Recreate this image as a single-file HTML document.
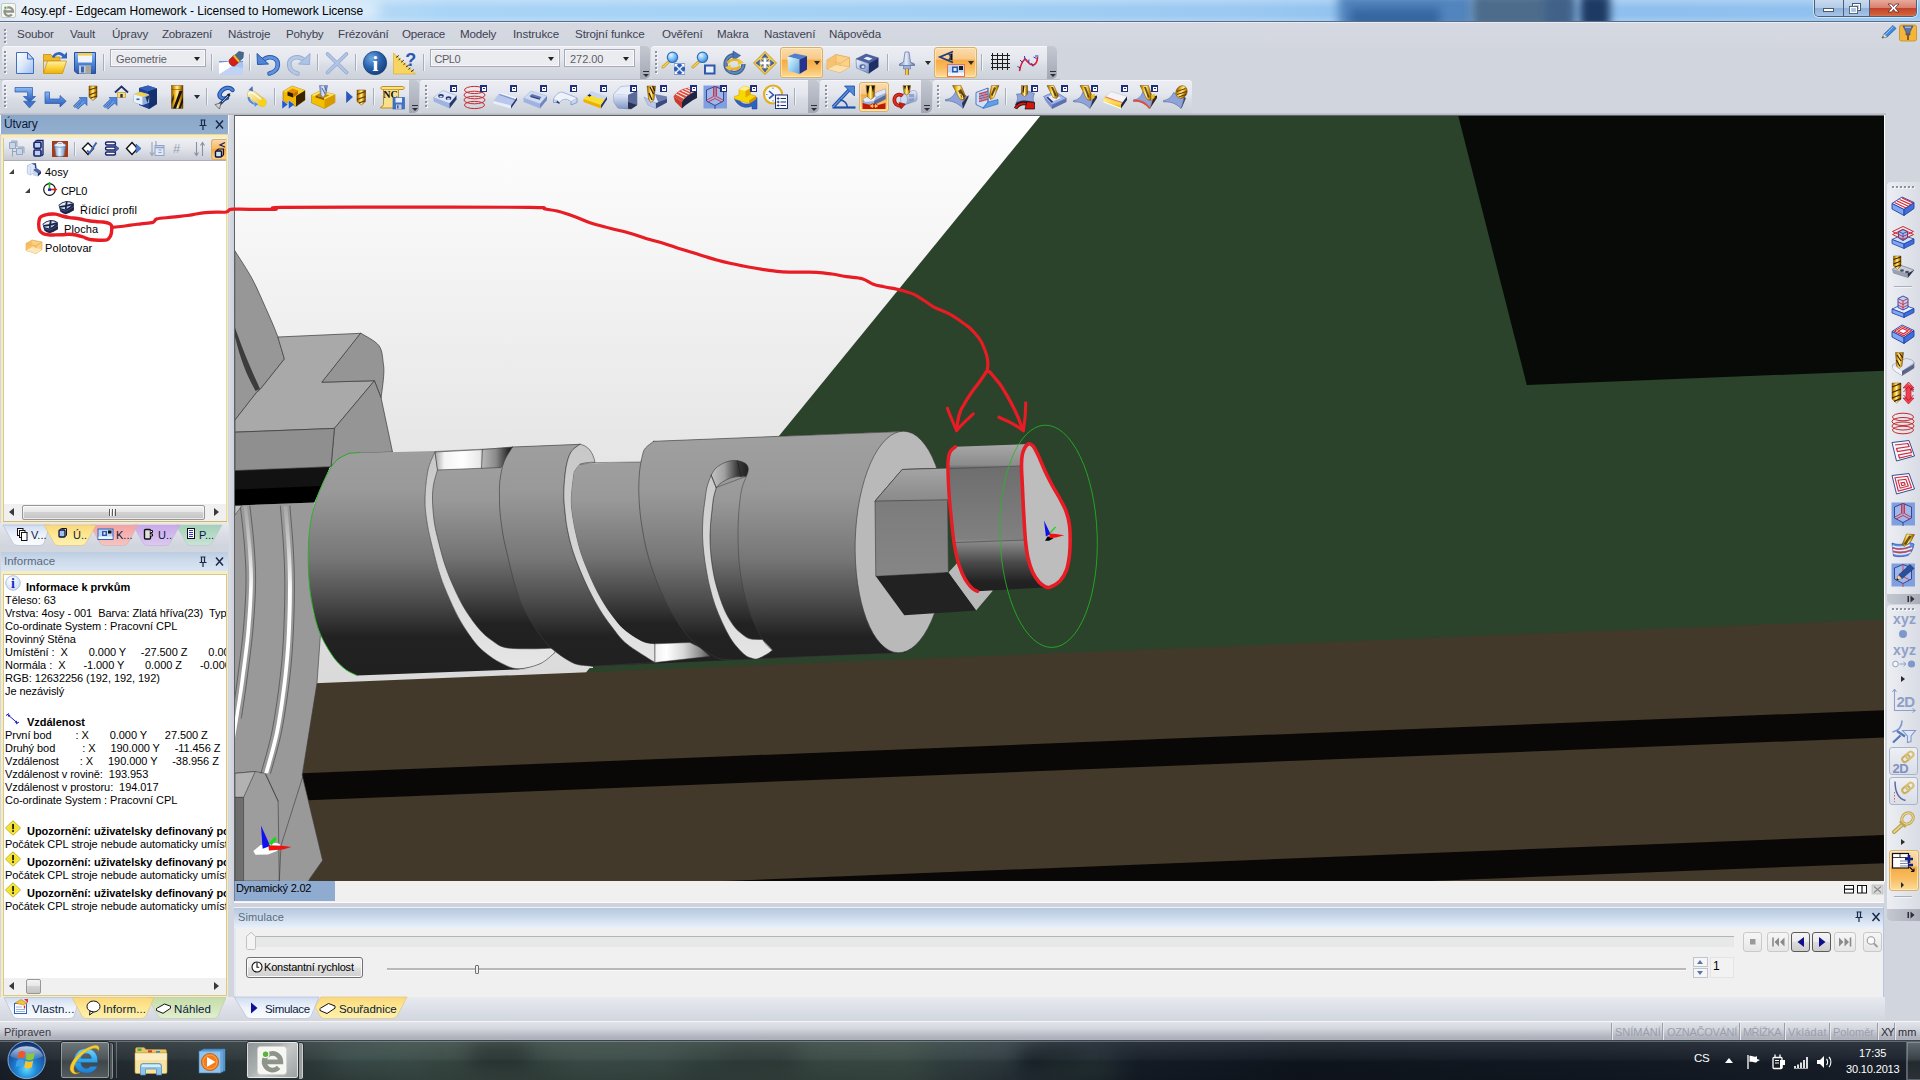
<!DOCTYPE html>
<html lang="cs"><head><meta charset="utf-8"><title>4osy.epf - Edgecam Homework</title>
<style>
html,body{margin:0;padding:0;width:1920px;height:1080px;overflow:hidden;background:#d1d5dd;}
body{font-family:"Liberation Sans",sans-serif;font-size:12px;color:#000;}
#root{position:relative;width:1920px;height:1080px;overflow:hidden;background:#d1d5dd;}
.a{position:absolute;}
.t{position:absolute;white-space:pre;line-height:1;}
svg{position:absolute;overflow:visible;}
</style></head><body><div id="root">
<!-- ===== TITLE BAR ===== -->
<div class="a" id="titlebar" style="left:0;top:0;width:1920px;height:22px;overflow:hidden;background:linear-gradient(90deg,#d9e6f4 0px,#cfe2f5 250px,#b6d9f6 370px,#a9d4f6 450px,#a6d2f5 700px,#a1cef3 1000px,#9ac8f1 1250px,#92c3ef 1340px,#8ebfee 1650px,#92c3ef 1920px);">
  <div class="a" style="left:0;top:0;width:1920px;height:22px;background:linear-gradient(180deg,rgba(255,255,255,.25) 0,rgba(255,255,255,0) 8px,rgba(255,255,255,0) 15px,rgba(255,255,255,.18) 21px);"></div>
  <!-- blurred wallpaper blobs behind glass -->
  <div class="a" style="left:1338px;top:-6px;width:135px;height:34px;background:#4f82bb;filter:blur(5px);opacity:.95"></div>
  <div class="a" style="left:1350px;top:8px;width:90px;height:20px;background:#2f5f9a;filter:blur(5px);opacity:.8"></div>
  <div class="a" style="left:1472px;top:-6px;width:100px;height:34px;background:#4d6c8c;filter:blur(4px);"></div>
  <div class="a" style="left:1580px;top:-6px;width:30px;height:34px;background:#1d3a63;filter:blur(4px);"></div>
  <div class="a" style="left:1545px;top:-6px;width:30px;height:34px;background:#3e5f88;filter:blur(4px);opacity:.8"></div>
  <!-- text glow -->
  <div class="a" style="left:10px;top:2px;width:370px;height:17px;background:rgba(255,255,255,.55);filter:blur(6px);border-radius:9px"></div>
  <!-- app icon -->
  <div class="a" style="left:1px;top:3px;width:15px;height:15px;background:#f7f7f4;border:1px solid #c4c9c4;border-radius:2px;box-sizing:border-box"></div>
  <svg style="left:1px;top:3px" width="15" height="15" viewBox="0 0 15 15"><path d="M3.400 8.500 H12 A4.300 4.300 0 1 0 10.900 11.500" fill="none" stroke="#8f9487" stroke-width="2.300"/><circle cx="4.300" cy="4.700" r="2" fill="#f7f7f4"/><circle cx="4.400" cy="4.800" r="1.250" fill="#59b536"/></svg>
  <div class="t" style="left:21px;top:5px;font-size:12px;color:#000;letter-spacing:-0.03px">4osy.epf - Edgecam Homework - Licensed to Homework License</div>
  <!-- caption buttons -->
  <div class="a" style="left:1814px;top:0;width:103px;height:17px;border:1px solid #4b5f79;border-top:none;border-radius:0 0 5px 5px;box-sizing:border-box;overflow:hidden;box-shadow:0 0 0 1px rgba(255,255,255,.55)">
    <div class="a" style="left:0;top:0;width:28px;height:17px;background:linear-gradient(180deg,#c9dbef 0,#b4cce8 45%,#90b2db 50%,#a9c7e8 100%);border-right:1px solid #4b5f79"></div>
    <div class="a" style="left:29px;top:0;width:25px;height:17px;background:linear-gradient(180deg,#c9dbef 0,#b4cce8 45%,#90b2db 50%,#a9c7e8 100%);border-right:1px solid #4b5f79"></div>
    <div class="a" style="left:55px;top:0;width:48px;height:17px;background:linear-gradient(180deg,#e8a99c 0,#d9816f 45%,#c4432b 50%,#cf5e3b 85%,#e08a55 100%);"></div>
  </div>
  <svg style="left:1814px;top:0" width="103" height="17" viewBox="0 0 103 17">
    <rect x="9.5" y="8.5" width="10" height="3" fill="#fff" stroke="#4a5a70" stroke-width="1"/>
    <rect x="38.5" y="3.5" width="8" height="7" fill="none" stroke="#4a5a70" stroke-width="1"/><rect x="39.5" y="4.5" width="6" height="5" fill="none" stroke="#fff" stroke-width="1"/>
    <rect x="35.5" y="6.5" width="8" height="7" fill="#a9c4e6" stroke="#4a5a70" stroke-width="1"/><rect x="36.5" y="7.5" width="6" height="5" fill="none" stroke="#fff" stroke-width="1.2"/>
    <path d="M74 4 L77.5 4 L79.5 6.6 L81.5 4 L85 4 L81.3 8 L85 12 L81.5 12 L79.5 9.4 L77.5 12 L74 12 L77.7 8 Z" fill="#fff" stroke="#5a2a22" stroke-width=".8"/>
  </svg>
</div>
<div class="a" style="left:0;top:21px;width:1920px;height:1px;background:#5b6d85"></div>
<div class="a" style="left:0;top:22px;width:1920px;height:1px;background:#e9ecf2"></div>
<!-- ===== MENU BAR ===== -->
<div class="a" id="menubar" style="left:0;top:23px;width:1920px;height:23px;background:linear-gradient(180deg,#d6d9e1 0,#d2d6de 100%)">
  <div class="a" style="left:5px;top:7px;width:2px;height:15px;background:repeating-linear-gradient(180deg,#f9fafc 0 2px,transparent 2px 4px)"></div>
  <div class="a" style="left:4px;top:6px;width:2px;height:15px;background:repeating-linear-gradient(180deg,#8d92a0 0 2px,transparent 2px 4px)"></div>
</div>
<div id="menu" style="position:absolute;left:0;top:28px;height:14px;font-size:11.6px;color:#3d4152;">
<span class="t" style="left:17px;letter-spacing:-0.1px">Soubor</span>
<span class="t" style="left:70px;letter-spacing:-0.1px">Vault</span>
<span class="t" style="left:112px;letter-spacing:-0.1px">Úpravy</span>
<span class="t" style="left:162px;letter-spacing:-0.25px">Zobrazení</span>
<span class="t" style="left:228px;letter-spacing:-0.1px">Nástroje</span>
<span class="t" style="left:286px;letter-spacing:-0.2px">Pohyby</span>
<span class="t" style="left:338px;letter-spacing:-0.1px">Frézování</span>
<span class="t" style="left:402px;letter-spacing:-0.2px">Operace</span>
<span class="t" style="left:460px;letter-spacing:-0.2px">Modely</span>
<span class="t" style="left:513px;letter-spacing:-0.1px">Instrukce</span>
<span class="t" style="left:575px;letter-spacing:-0.1px">Strojní funkce</span>
<span class="t" style="left:662px;letter-spacing:-0.1px">Ověření</span>
<span class="t" style="left:717px;letter-spacing:-0.1px">Makra</span>
<span class="t" style="left:764px;letter-spacing:-0.1px">Nastavení</span>
<span class="t" style="left:829px;letter-spacing:-0.1px">Nápověda</span>
</div>
<!-- top-right small icons -->
<svg style="left:1880px;top:24px" width="38" height="18" viewBox="0 0 38 18">
  <path d="M2 14 L4 10 L13 1.5 L16 4.5 L7 13 Z" fill="#3f8be0" stroke="#1f4f9a" stroke-width=".7"/><path d="M2 14 L4 10 L7 13 Z" fill="#f2d9a6"/><path d="M2 14 L3 12.2 L4.2 13.3Z" fill="#222"/><path d="M5.2 10.8 L13.2 2.6" stroke="#9ccaf7" stroke-width="1"/>
  <rect x="19.5" y="1" width="17" height="16" rx="2" fill="#f3b63a" stroke="#c98a1a" stroke-width=".8"/>
  <path d="M23 2 H33 L30 8 V11 H26 V8 Z" fill="#5a74a8" stroke="#2d4070" stroke-width=".6"/><rect x="27" y="9" width="2" height="7" fill="#8a5a1a"/><path d="M25 3.2 H31" stroke="#c9d6f0" stroke-width="1"/>
</svg>
<!-- ===== shared gradient defs ===== -->
<svg width="0" height="0" style="left:0;top:0"><defs>
<linearGradient id="gBlue" x1="0" y1="0" x2="0" y2="1"><stop offset="0" stop-color="#8dbaf2"/><stop offset=".5" stop-color="#4f86d8"/><stop offset="1" stop-color="#2a58ad"/></linearGradient>
<linearGradient id="gBlueH" x1="0" y1="0" x2="1" y2="0"><stop offset="0" stop-color="#8dbaf2"/><stop offset="1" stop-color="#2a58ad"/></linearGradient>
<linearGradient id="gPaper" x1="0" y1="0" x2="1" y2="1"><stop offset="0" stop-color="#ffffff"/><stop offset=".5" stop-color="#dbe7fb"/><stop offset="1" stop-color="#9dbdf0"/></linearGradient>
<linearGradient id="gGold" x1="0" y1="0" x2="1" y2="0"><stop offset="0" stop-color="#8a5a00"/><stop offset=".3" stop-color="#f2bb22"/><stop offset=".5" stop-color="#fff0a0"/><stop offset=".72" stop-color="#e0a010"/><stop offset="1" stop-color="#6a4000"/></linearGradient>
<linearGradient id="gYel" x1="0" y1="0" x2="0" y2="1"><stop offset="0" stop-color="#fff1a8"/><stop offset=".5" stop-color="#fbd447"/><stop offset="1" stop-color="#eeb100"/></linearGradient>
<linearGradient id="gSteel" x1="0" y1="0" x2="1" y2="1"><stop offset="0" stop-color="#f3f6fc"/><stop offset=".5" stop-color="#b8c7e6"/><stop offset="1" stop-color="#7088bb"/></linearGradient>
<linearGradient id="gSteelV" x1="0" y1="0" x2="0" y2="1"><stop offset="0" stop-color="#e6ecf8"/><stop offset="1" stop-color="#8198c8"/></linearGradient>
<linearGradient id="gOrange" x1="0" y1="0" x2="0" y2="1"><stop offset="0" stop-color="#fbd9a0"/><stop offset=".4" stop-color="#f9c370"/><stop offset=".45" stop-color="#f6a93c"/><stop offset="1" stop-color="#fcd98a"/></linearGradient>
<radialGradient id="gInfo" cx=".35" cy=".3" r=".8"><stop offset="0" stop-color="#6fa6e0"/><stop offset=".5" stop-color="#2a62ad"/><stop offset="1" stop-color="#113a78"/></radialGradient>
<radialGradient id="gLens" cx=".35" cy=".3" r=".8"><stop offset="0" stop-color="#e6f4ff"/><stop offset=".5" stop-color="#7fc0f5"/><stop offset="1" stop-color="#2f7fd0"/></radialGradient>
<linearGradient id="gRed" x1="0" y1="0" x2="0" y2="1"><stop offset="0" stop-color="#f0504a"/><stop offset="1" stop-color="#a01008"/></linearGradient>
<linearGradient id="gPill" x1="0" y1="0" x2="0" y2="1"><stop offset="0" stop-color="#eceef3"/><stop offset=".45" stop-color="#e3e6ec"/><stop offset=".6" stop-color="#d7dbe3"/><stop offset="1" stop-color="#cfd3dc"/></linearGradient>
</defs></svg>
<style>
.pill{position:absolute;height:33px;background:linear-gradient(180deg,#eceef3 0,#e4e7ed 42%,#d8dce4 60%,#cdd1da 100%);border-radius:4px 0 0 4px;box-shadow:inset 0 1px 0 #f5f6f9}
.chev{position:absolute;width:10px;height:33px;background:linear-gradient(180deg,#c4c8d1 0,#b4b8c3 50%,#a3a7b3 100%);border-radius:0 5px 5px 0}
.chev:after{content:"";position:absolute;left:2.5px;top:27.5px;border:3px solid transparent;border-top:3.5px solid #2e2e36;border-bottom:none}
.chev:before{content:"";position:absolute;left:2.5px;top:24.500px;width:6px;height:1.5px;background:#2e2e36}
.grip{position:absolute;width:2px;height:23px;margin:1px 0 0 1px;background:repeating-linear-gradient(180deg,#f9fafc 0 2px,transparent 2px 4px)}
.grip:after{content:"";position:absolute;left:-1px;top:-1px;width:2px;height:23px;background:repeating-linear-gradient(180deg,#8d92a0 0 2px,transparent 2px 4px)}
.sep{position:absolute;width:1px;height:17px;background:#a9aebb;box-shadow:1px 0 0 #f2f3f6}
.combo{position:absolute;height:18px;box-sizing:border-box;border:1px solid #a7abb8;background:#ebecf0;box-shadow:inset 0 0 0 1px #f9f9fb;font-size:11px;color:#5c5c66;}
.combo span{position:absolute;left:5px;top:2.500px;letter-spacing:-.05px;white-space:pre}
.combo i{position:absolute;right:5px;top:7px;border:3.5px solid transparent;border-top:4px solid #222;border-bottom:none}
.dd{position:absolute;border:3.5px solid transparent;border-top:4px solid #2a2a30;border-bottom:none}
.hot{position:absolute;box-sizing:border-box;border:1px solid #d9b06a;border-radius:3px;background:linear-gradient(180deg,#fbdcae 0,#f9c987 38%,#f5ab45 42%,#f8bc60 70%,#fcdc98 100%);box-shadow:inset 0 0 0 1px rgba(255,240,200,.6)}
.ic{position:absolute;width:24px;height:24px}
</style>
<!-- toolbar backgrounds row1 -->
<div class="a" style="left:0;top:79px;width:1060px;height:1px;background:#bbbec8"></div>
<div class="pill" style="left:2px;top:46px;width:638px"></div><div class="chev" style="left:640px;top:46px"></div>
<div class="pill" style="left:651px;top:46px;width:396px"></div><div class="chev" style="left:1047px;top:46px"></div>
<!-- row2 -->
<div class="pill" style="left:2px;top:80px;width:407px"></div><div class="chev" style="left:409px;top:80px"></div>
<div class="pill" style="left:420px;top:80px;width:388px"></div><div class="chev" style="left:808px;top:80px;width:11px"></div>
<div class="pill" style="left:820px;top:80px;width:101px"></div><div class="chev" style="left:921px;top:80px;width:11px"></div>
<div class="pill" style="left:933px;top:80px;width:259px;border-radius:4px"></div>
<!-- grippers -->
<div class="grip" style="left:4px;top:51px"></div><div class="grip" style="left:655px;top:51px"></div>
<div class="grip" style="left:4px;top:85px"></div><div class="grip" style="left:425px;top:85px"></div><div class="grip" style="left:825px;top:85px"></div><div class="grip" style="left:937px;top:85px"></div>
<!-- separators row1 -->
<div class="sep" style="left:103px;top:54px"></div><div class="sep" style="left:211px;top:54px"></div><div class="sep" style="left:249px;top:54px"></div><div class="sep" style="left:317px;top:54px"></div><div class="sep" style="left:355px;top:54px"></div><div class="sep" style="left:423px;top:54px"></div>
<div class="sep" style="left:887px;top:54px"></div><div class="sep" style="left:981px;top:54px"></div>
<!-- separators row2 -->
<div class="sep" style="left:206px;top:88px"></div><div class="sep" style="left:274px;top:88px"></div><div class="sep" style="left:373px;top:88px"></div>
<div class="sep" style="left:794px;top:88px"></div><div class="sep" style="left:1005px;top:88px"></div>
<!-- combos -->
<div class="combo" style="left:110px;top:49px;width:96px"><span>Geometrie</span><i></i></div>
<div class="combo" style="left:430px;top:49px;width:130px"><span style="letter-spacing:-.5px;left:3.500px">CPL0</span><i></i></div>
<div class="combo" style="left:564px;top:49px;width:71px"><span>272.00</span><i></i></div>
<!-- hot (checked) buttons -->
<div class="hot" style="left:780px;top:47px;width:43px;height:31px"></div>
<div class="hot" style="left:934px;top:47px;width:43px;height:31px"></div>
<div class="hot" style="left:859px;top:82px;width:30px;height:30px"></div>
<!-- dropdown arrows -->
<div class="dd" style="left:194px;top:95px"></div><div class="dd" style="left:814px;top:61px"></div><div class="dd" style="left:925px;top:61px"></div><div class="dd" style="left:968px;top:61px"></div>
<!-- ===== ROW 1 ICONS (centre y=63 => top 51) ===== -->
<!-- New -->
<svg class="ic" style="left:13px;top:51px" viewBox="0 0 24 24"><path d="M3.5 1.5 H14.5 L20.5 8 V22.5 H3.5 Z" fill="url(#gPaper)" stroke="#3f6fc4" stroke-width="1"/><path d="M14.5 1.5 V8 H20.5 Z" fill="#c4d7f7" stroke="#3f6fc4" stroke-width="1" stroke-linejoin="round"/></svg>
<!-- Open -->
<svg class="ic" style="left:43px;top:51px" viewBox="0 0 24 24"><path d="M0.5 22 V3.5 H8 L10 6 H17 V10 H0.5" fill="#f0b92a" stroke="#c48a10" stroke-width=".8"/><path d="M0.5 22.5 L4.5 10 H23.5 L19.5 22.5 Z" fill="url(#gYel)" stroke="#c9940f" stroke-width=".8"/><path d="M10 6.5 C12 1.5 18 1 21 5.5" fill="none" stroke="#2f66c0" stroke-width="2.6"/><path d="M17.5 7.5 L24 7.5 L24 1 Z" fill="#2f66c0"/></svg>
<!-- Save -->
<svg class="ic" style="left:73px;top:51px" viewBox="0 0 24 24"><path d="M1.5 1.5 H22.5 V22.5 H4 L1.5 20 Z" fill="url(#gBlue)" stroke="#2a4f9c" stroke-width="1"/><rect x="5" y="2" width="14" height="9.5" fill="#f2f4fb"/><rect x="5" y="2" width="14" height="2.6" fill="#f5cf4a"/><rect x="6" y="14.5" width="12" height="8" fill="#c8ccd6"/><rect x="8" y="15.5" width="3" height="6" fill="#3a64b8"/><path d="M12.5 14.5 h5.5 v8 h-5.5z" fill="#a9a69a"/></svg>
<!-- Eraser -->
<svg class="ic" style="left:219px;top:51px" viewBox="0 0 24 24"><path d="M0 10 H24 V23.5 H0 Z" fill="#a9c3f0"/><path d="M0 10.5 H24" stroke="#6f8fd0" stroke-width="1"/><path d="M0 23.5 V12 L10 10.5 L13.5 15 Z" fill="#ffffff"/><path d="M0 23.5 L13.5 15 L24 17 V23.5Z" fill="#c9daf8" opacity=".7"/><path d="M15 5 L20 0.5 L24.5 1.5 L24 7 L19.5 11 Z" fill="#46698f" stroke="#2d4a6d" stroke-width=".6"/><path d="M10.5 8.5 L14.5 4.8 L19.8 11.2 L15.5 15 C12 15.5 9 12 10.5 8.5Z" fill="#d4201a" stroke="#8a0c08" stroke-width=".6"/><path d="M14 5.2 L15.6 3.8 L21 10.2 L19.4 11.6 Z" fill="#f2c23c" stroke="#a8780c" stroke-width=".5"/></svg>
<!-- Undo -->
<svg class="ic" style="left:256px;top:51px" viewBox="0 0 24 24"><path d="M6.5 9.5 C12 4 21.5 6 21.8 13 C22 18 18 21.5 13.5 22.5" fill="none" stroke="#2a58ad" stroke-width="4.6" stroke-linecap="round"/><path d="M6.5 9.5 C12 4 21.5 6 21.8 13 C22 18 18 21.5 13.5 22.5" fill="none" stroke="#5f93df" stroke-width="2.8" stroke-linecap="round"/><path d="M1 2.5 L1.5 13.5 L12.5 13 Z" fill="#4f86d8" stroke="#2a58ad" stroke-width="1" stroke-linejoin="round"/></svg>
<!-- Redo (disabled look) -->
<svg class="ic" style="left:287px;top:51px" viewBox="0 0 24 24" opacity=".9"><path d="M17.5 9.5 C12 4 2.5 6 2.2 13 C2 18 6 21.5 10.5 22.5" fill="none" stroke="#8fa6cf" stroke-width="4.6" stroke-linecap="round"/><path d="M17.5 9.5 C12 4 2.5 6 2.2 13 C2 18 6 21.5 10.5 22.5" fill="none" stroke="#b3c6e8" stroke-width="2.8" stroke-linecap="round"/><path d="M23 2.5 L22.5 13.5 L11.5 13 Z" fill="#a9c0e8" stroke="#8fa6cf" stroke-width="1" stroke-linejoin="round"/></svg>
<!-- Delete X (disabled look) -->
<svg class="ic" style="left:325px;top:51px" viewBox="0 0 24 24"><path d="M2.5 3 L21.5 21.5 M21.5 3 L2.5 21.5" stroke="#93a9d2" stroke-width="3.6" stroke-linecap="round"/><path d="M2.5 3 L21.5 21.5 M21.5 3 L2.5 21.5" stroke="#b5c7e8" stroke-width="1.8" stroke-linecap="round"/></svg>
<!-- Info -->
<svg class="ic" style="left:363px;top:51px" viewBox="0 0 24 24"><circle cx="12" cy="12" r="11.7" fill="url(#gInfo)" stroke="#0e3168" stroke-width=".6"/><text x="12.300" y="20" text-anchor="middle" font-family="Liberation Serif, serif" font-size="22" font-weight="700" fill="#fff">i</text></svg>
<!-- Ruler + ? -->
<svg class="ic" style="left:393px;top:51px" viewBox="0 0 24 24"><path d="M0.5 2 L22.5 23 H0.5 Z" fill="#f7d562" stroke="#d9a820" stroke-width=".6"/><path d="M3 6.5 l2.8 -2 M5.5 9 l1.8 -1.4 M8 11.3 l2.8 -2 M10.5 13.7 l1.8 -1.4 M13 16 l2.8 -2 M15.5 18.4 l1.8 -1.4 M18 20.7 l2.8 -2" stroke="#3a2a00" stroke-width="1"/><text x="12.2" y="14.5" font-family="Liberation Sans, sans-serif" font-size="18" font-weight="700" fill="#2757b0">?</text></svg>
<!-- Zoom extents -->
<svg class="ic" style="left:661px;top:51px" viewBox="0 0 24 24"><path d="M2 16 L8.5 10" stroke="#c79a1a" stroke-width="3" stroke-linecap="round"/><path d="M2 16 L8.5 10" stroke="#f6d35a" stroke-width="1.4" stroke-linecap="round"/><circle cx="11.5" cy="6.3" r="5.2" fill="url(#gLens)" stroke="#2f6fc0" stroke-width="1.2"/><rect x="13" y="12.5" width="11" height="11" fill="#2f5fb8"/><path d="M18.5 18 L14 13.5 M18.5 18 L23 13.5 M18.5 18 L14 22.5 M18.5 18 L23 22.5" stroke="#dfe9fb" stroke-width="1.6"/><path d="M13.5 13 h3.5 l-3.5 3.5z M23.5 13 v3.5 l-3.5 -3.5z M13.5 23 v-3.5 l3.5 3.5z M23.5 23 h-3.5 l3.5 -3.5z" fill="#fff"/></svg>
<!-- Zoom window -->
<svg class="ic" style="left:691px;top:51px" viewBox="0 0 24 24"><path d="M2 16 L8.5 10" stroke="#c79a1a" stroke-width="3" stroke-linecap="round"/><path d="M2 16 L8.5 10" stroke="#f6d35a" stroke-width="1.4" stroke-linecap="round"/><circle cx="11.5" cy="6.3" r="5.2" fill="url(#gLens)" stroke="#2f6fc0" stroke-width="1.2"/><rect x="14" y="14.5" width="9.5" height="8" fill="#e9eef9" stroke="#2a58ad" stroke-width="2"/></svg>
<!-- Rotate -->
<svg class="ic" style="left:722px;top:51px" viewBox="0 0 24 24"><path d="M12 4 A9 9 0 1 0 21.5 13" fill="none" stroke="#3e5f8e" stroke-width="4.2"/><path d="M12 4 A9 9 0 1 0 21.5 13" fill="none" stroke="#5f86c0" stroke-width="2"/><path d="M11 0 L18.5 4.5 L11 9.5 Z" fill="#4873b5" stroke="#2a4a80" stroke-width=".6"/><path d="M5.5 12 C8 8 15 8 18 10.5" fill="none" stroke="#e9b422" stroke-width="2.6"/><path d="M16 7.5 L22 11.5 L16 14 Z" fill="#f2c332"/><path d="M18.5 15.5 C15 19 9 18.5 6 16.5" fill="none" stroke="#e9b422" stroke-width="2.6"/><path d="M8.5 13.5 L3 16.5 L8.5 20 Z" fill="#f2c332"/></svg>
<!-- Pan -->
<svg class="ic" style="left:753px;top:51px" viewBox="0 0 24 24"><path d="M12 0.500 L23.500 12 L12 23.500 L0.500 12 Z" fill="#f6cf52" stroke="#b8860f" stroke-width=".8"/><path d="M12 2.800 L15 6.800 H9Z M12 21.200 L15 17.200 H9Z M2.800 12 L6.800 9 V15Z M21.200 12 L17.200 9 V15Z" fill="#3f66ad" stroke="#24407a" stroke-width=".4"/><path d="M10.600 6.800 H13.400 V10.600 H17.200 V13.400 H13.400 V17.200 H10.600 V13.400 H6.800 V10.600 H10.600Z" fill="#fff" stroke="#8a9ac0" stroke-width=".5"/><path d="M8.300 8.300 L10.300 10.300 M15.700 8.300 L13.700 10.300 M8.300 15.700 L10.300 13.700 M15.700 15.700 L13.700 13.700" stroke="#3f66ad" stroke-width="1.200"/></svg>
<!-- Shaded cube (in hot) -->
<svg class="ic" style="left:785px;top:51px" viewBox="0 0 24 24"><path d="M2.5 5.5 L10 2.5 L22 5 L14.5 8.5 Z" fill="#4f7fd0"/><path d="M2.5 5.5 L14.5 8.5 V23 L3 19.5 Z" fill="url(#gCubeF)"/><path d="M14.5 8.5 L22 5 V18.5 L14.5 23 Z" fill="#24348c"/><defs><linearGradient id="gCubeF" x1="0" y1="0" x2="1" y2="1"><stop offset="0" stop-color="#e9faff"/><stop offset=".5" stop-color="#9fd4f5"/><stop offset="1" stop-color="#5f9fe0"/></linearGradient></defs></svg>
<!-- Stock (orange open box) -->
<svg class="ic" style="left:826px;top:51px" viewBox="0 0 24 24"><path d="M1 9 L10 3.5 L23.5 6.5 V16 L14 21.5 L1 18 Z" fill="#fbd08a" stroke="#e0a040" stroke-width=".7"/><path d="M1 9 L14 12.5 L23.5 6.5 M14 12.5 V21.5" fill="none" stroke="#e8ac50" stroke-width=".7"/><path d="M1 9 L10 3.5 V13.5 L1 18Z" fill="#f7bf6a" opacity=".8"/><path d="M10 13.5 L23.5 16 L14 21.5 L1 18Z" fill="#fde2b0" opacity=".9"/><path d="M10 3.5 V13.5 L23.5 16 M10 13.5 L1 18" fill="none" stroke="#e8ac50" stroke-width=".6"/></svg>
<!-- Fixture (blue/gray block with hole) -->
<svg class="ic" style="left:855px;top:51px" viewBox="0 0 24 24"><path d="M1 8 L11 3 L23.5 7 L14 12.5 Z" fill="#4a63a0" stroke="#2a3f78" stroke-width=".5"/><path d="M8.5 7.5 L12 5.8 L17.5 7.6 L14 9.4Z" fill="#e9eef8"/><path d="M1 8 L14 12.5 V22.5 L1.5 17 Z" fill="url(#gSteel)" stroke="#4a5f95" stroke-width=".5"/><path d="M14 12.5 L23.5 7 V16 L14 22.5 Z" fill="#1f2f66"/><ellipse cx="7.5" cy="15.5" rx="3" ry="2.3" fill="#4a63a0"/><ellipse cx="8" cy="15.8" rx="1.6" ry="1.2" fill="#dfe6f5"/></svg>
<!-- Tool holder -->
<svg class="ic" style="left:895px;top:51px" viewBox="0 0 24 24"><path d="M10 1 H14 L15.5 11 L19.5 13 V14.5 H4.5 V13 L8.5 11 Z" fill="url(#gSteelH2)" stroke="#4a63a0" stroke-width=".6"/><path d="M8.5 14.5 H15.5 V18 H8.5Z" fill="#9fb0d8" stroke="#4a63a0" stroke-width=".5"/><rect x="10.3" y="18" width="3.4" height="6" fill="url(#gGold)"/><defs><linearGradient id="gSteelH2" x1="0" y1="0" x2="1" y2="0"><stop offset="0" stop-color="#6f88c0"/><stop offset=".45" stop-color="#e6ecf8"/><stop offset="1" stop-color="#5a72aa"/></linearGradient></defs></svg>
<!-- View/eye with picture (in hot) -->
<svg class="ic" style="left:938px;top:50px;width:28px;height:28px" viewBox="0 0 28 28"><path d="M15 1.5 L2 7 L15 12.5" fill="none" stroke="#1f3a80" stroke-width="1.8" stroke-linejoin="miter"/><path d="M10.5 4 C13 5.5 13 8.5 10.5 10" fill="none" stroke="#1f3a80" stroke-width="1.4"/><path d="M12 4 L14.5 3.2 V10.6 L12 9.8 C13.2 8 13.2 6 12 4Z" fill="#111"/><rect x="9.5" y="14.5" width="17" height="12" fill="#bcd7f5" stroke="#e86f5a" stroke-width="1"/><rect x="10" y="22.5" width="16" height="3.5" fill="#f2f6fc"/><rect x="14" y="16.5" width="6" height="6" fill="#2a58ad"/><rect x="15.5" y="18" width="3" height="3" fill="#dfe9fb"/><rect x="21" y="16" width="4" height="4" fill="#1a1a1a"/></svg>
<!-- Grid -->
<svg class="ic" style="left:987px;top:51px" viewBox="0 0 24 24" shape-rendering="crispEdges"><path d="M3.500 4.500 H22.500 M3.500 8.500 H22.500 M3.500 12.500 H22.500 M3.500 16.500 H22.500 M5.500 2 V19 M10.500 2 V19 M15.500 2 V19 M20.500 2 V19" stroke="#1c1c1c" stroke-width="1"/></svg>
<!-- Toolpath curve -->
<svg class="ic" style="left:1016px;top:51px" viewBox="0 0 24 24"><path d="M3.5 20 C4.5 14 6 10.5 9 8 C12 10 14 16 18.5 13.5 C20.5 12 21.5 9 21.5 6" fill="none" stroke="#e01830" stroke-width="1.6"/><path d="M1.5 15.5 L4.5 17 M4 9 L6.5 11.5 M8.5 5 L9 8.5 M13 8.5 L12.5 12 M15.5 12 L17 15.5 M17.5 6 L20.5 7.5 M19 5 H22.5" stroke="#2438c8" stroke-width="1"/></svg>
<!-- ===== ROW 2 ICONS (centre y=97 => top 85) ===== -->
<!-- rapid down -->
<svg class="ic" style="left:13px;top:85px" viewBox="0 0 24 24"><path d="M2 2.500 H19.500 V11.500 H22.500 L16.500 17 L10.500 11.500 H14.500 V7 H2 Z" fill="url(#gBlue)" stroke="#2a58ad" stroke-width=".7" stroke-linejoin="round"/><path d="M10.500 16.200 H22.500 L16.500 23Z" fill="#3f72c8" stroke="#2a58ad" stroke-width=".6" stroke-linejoin="round"/></svg>
<!-- feed right -->
<svg class="ic" style="left:43px;top:85px" viewBox="0 0 24 24"><path d="M2 7 H6.500 V14 H17 V10.500 L23.200 16.200 L17 22 V18.500 H2 Z" fill="url(#gBlue)" stroke="#2a58ad" stroke-width=".7" stroke-linejoin="round"/></svg>
<!-- to toolchange (arrows + drill) -->
<svg class="ic" style="left:73px;top:85px" viewBox="0 0 24 24"><path d="M1 22 L8 15 M4 23.5 L11 16.5" stroke="#2a58ad" stroke-width="2.6"/><path d="M6 12.5 H14 V20.5 L11.6 18 L9 20.6 L6.2 17.8 L8.8 15.2 Z" fill="#4f86d8" stroke="#2a58ad" stroke-width=".6"/><path d="M1 22 L8 15 M4 23.5 L11 16.5" stroke="#6fa0e8" stroke-width="1.2"/><path d="M16 1 H24 V12 L20 15.5 L16 12 Z" fill="url(#gGold)" stroke="#6a4000" stroke-width=".5"/><path d="M16 5 L24 2.5 M16 10 L24 7 M17.5 13 L24 11" stroke="#5a3500" stroke-width="1.1"/></svg>
<!-- to home (arrows + house) -->
<svg class="ic" style="left:103px;top:85px" viewBox="0 0 24 24"><path d="M1 22 L8 15 M4 23.5 L11 16.5" stroke="#2a58ad" stroke-width="2.6"/><path d="M6 12.5 H14 V20.5 L11.6 18 L9 20.6 L6.2 17.8 L8.8 15.2 Z" fill="#4f86d8" stroke="#2a58ad" stroke-width=".6"/><path d="M1 22 L8 15 M4 23.5 L11 16.5" stroke="#6fa0e8" stroke-width="1.2"/><path d="M14.5 7.5 H22.5 V12.5 H14.5Z" fill="#f7dc7a" stroke="#b8860f" stroke-width=".6"/><path d="M12 7.5 L18.5 1.5 L25 7.5" fill="none" stroke="#1f2f66" stroke-width="1.8"/><rect x="17.3" y="9" width="2.4" height="3.5" fill="#1f2f66"/></svg>
<!-- tool store (cabinet) -->
<svg class="ic" style="left:133px;top:85px" viewBox="0 0 24 24"><path d="M6 3 L15 0.5 L24 3.5 V19 L16 24 L6 20 Z" fill="#1f3f8f"/><path d="M6 3 L15 0.5 L24 3.5 L15 6.5Z" fill="#3560b8"/><path d="M15 6.500 L24 3.5 V19 L16 24Z" fill="#15306f"/><path d="M1 9.500 L7 7 L16 9.500 V17.500 L9 20 L1 17Z" fill="#cfe4fa" stroke="#6f95c8" stroke-width=".5"/><path d="M1 9.500 L7 7 L16 9.500 L9.500 12Z" fill="#f2d04a"/><path d="M1 9.500 L9.500 12 V20 L1 17Z" fill="#e9f3fd"/><rect x="3.500" y="13.500" width="3" height="1.600" fill="#3560b8"/><path d="M9.500 12 L16 9.500 V17.500 L9.500 20Z" fill="#8fb0dc"/><path d="M12.500 12 L16.500 10.500 L14.500 18Z" fill="#22334f"/></svg>
<!-- tool (gold endmill) -->
<svg class="ic" style="left:165px;top:85px" viewBox="0 0 24 24"><rect x="6.500" y="0.500" width="11.500" height="23" fill="url(#gGold)" stroke="#5a3500" stroke-width=".4"/><path d="M6.500 4.500 H18" stroke="#7a4a00" stroke-width=".6"/><path d="M14.500 6 L17.500 6 L11 23.500 L8 23.500 Z" fill="#1a1205"/><path d="M17.800 12 L18 17 L15.500 23.500 L13.500 23.500Z" fill="#1a1205"/><path d="M6.600 15 L8.600 9 L8.800 13.500 L6.600 20Z" fill="#3a2500"/></svg>
<!-- clamp -->
<svg class="ic" style="left:213px;top:85px" viewBox="0 0 24 24"><path d="M14 13 C8 15 4.500 11 8 6.500 C11 2.500 17 1.500 19.500 5" fill="none" stroke="#1f4fa8" stroke-width="4.400" stroke-linecap="round"/><path d="M14 13 C8 15 4.500 11 8 6.500 C11 2.500 17 1.500 19.500 5" fill="none" stroke="#4f86d8" stroke-width="2.200" stroke-linecap="round"/><path d="M16.500 9.500 L6.500 19.500" stroke="#2a3f70" stroke-width="3"/><path d="M16 10 L9 17" stroke="#9fb8e0" stroke-width="1"/><path d="M17.500 8 L14 9.500 L16 11.500Z" fill="#111"/><path d="M2 19.500 L8 18 L6.500 24 Z" fill="#d8d8d8" stroke="#555" stroke-width=".8"/></svg>
<!-- rotary -->
<svg class="ic" style="left:244px;top:85px" viewBox="0 0 24 24"><path d="M5.500 8 L14.500 13.500 A4.600 4.600 0 0 0 19 21.500 L8 18 Z" fill="#cfe0f2"/><path d="M3.500 8.500 C4 5 8 4.500 10.500 6.500 L21 14.500 C23.500 17 22 21.500 18.500 21.500 C16 21.500 14 20 12 18.500 L5 13 C3.500 11.500 3.300 10 3.500 8.500Z" fill="url(#gRot)" stroke="#c8a020" stroke-width=".5"/><ellipse cx="18.500" cy="17.800" rx="3.800" ry="4" fill="#f6d21a"/><path d="M4 9 C6 7 9 7.500 11 9.500 L17 14.500" fill="none" stroke="#fff" stroke-width="1.600" opacity=".8"/><path d="M8.500 1 L4.500 5 L9 6.500 Z" fill="#3f72c8"/><path d="M4.500 12 C4.500 15 7.500 18 11.500 19.500" fill="none" stroke="#4f86d8" stroke-width="2"/><path d="M10 16.500 L14.500 19 L10.500 22.500Z" fill="#4f86d8" stroke="#dfe9fb" stroke-width=".5"/><defs><linearGradient id="gRot" x1="0" y1="0" x2="1" y2="1"><stop offset="0" stop-color="#fff7c8"/><stop offset=".5" stop-color="#f2d878"/><stop offset="1" stop-color="#f0c000"/></linearGradient></defs></svg>
<!-- generate (yellow block + blue double arrows) -->
<svg class="ic" style="left:281px;top:85px" viewBox="0 0 24 24"><path d="M2 6.500 L11 1 L24 5.500 V15 L15 21.500 L2 16Z" fill="#f2b800" stroke="#8a5a00" stroke-width=".5"/><path d="M2 6.500 L11 1 L24 5.500 L15 11Z" fill="#f9cf2a"/><path d="M15 11 L24 5.500 V15 L15 21.500Z" fill="#3a2400"/><path d="M6.500 6.500 L11.500 3.500 L17 5.500 L12 8.500Z" fill="#e88a00"/><path d="M6.500 6.500 L12 8.500 V12.500 L6.500 10.500Z" fill="#2a1a00"/><path d="M12 8.500 L17 5.500 V9 L12 12.500Z" fill="#c87000"/><path d="M1 15 L7 19.500 L1 24Z M7.500 15 L13.500 19.500 L7.500 24Z" fill="#2458c8" stroke="#dfe9fb" stroke-width=".4"/></svg>
<!-- simulate (yellow block + endmill) -->
<svg class="ic" style="left:311px;top:85px" viewBox="0 0 24 24"><path d="M0.500 10 L9 6 L24 9.500 V17.500 L13.500 23.500 L0.500 18Z" fill="#f2c000" stroke="#a87800" stroke-width=".5"/><path d="M0.500 10 L9 6 L24 9.500 L13.500 14.500Z" fill="#fbe060"/><path d="M13.500 14.500 L24 9.500 V17.500 L13.500 23.500Z" fill="#d89a00"/><path d="M4.500 10.500 L9.500 8 L18.500 10.300 L13 13Z" fill="#c88a00"/><path d="M4.500 10.500 L13 13 V15 L4.500 12.500Z" fill="#8a5a00"/><path d="M8.500 0.500 H16.500 L15 9 L12 12.500 L9.500 9.500Z" fill="url(#gSteelH2)" stroke="#4a63a0" stroke-width=".5"/><path d="M11 3 L14 9 M13.500 1 L15.500 6" stroke="#3f5a98" stroke-width=".9"/></svg>
<!-- run tool -->
<svg class="ic" style="left:343px;top:85px" viewBox="0 0 24 24"><path d="M3.500 6.500 L9.500 12 L3.500 17.500Z" fill="#2458c8" stroke="#1a3f98" stroke-width=".5"/><path d="M14 5 H22.500 V16.500 L18.500 20 L14 16.500Z" fill="url(#gGold)" stroke="#6a4000" stroke-width=".5"/><path d="M14 9.500 L22.500 6.500 M14 14.500 L22.500 11.500 M16 18 L22 15.800" stroke="#5a3500" stroke-width="1.100"/></svg>
<!-- NC save -->
<svg class="ic" style="left:379px;top:84px;width:26px;height:26px" viewBox="0 0 26 26"><path d="M3.500 2.500 C1.500 2.500 1 5.500 3.500 5.500 H4.500 V20.500 C4.500 23 1.500 22 1.500 24 H19 C21.500 24 21.500 21 19.500 21 V5.500 H24 C26 5 25.500 2.500 23.500 2.500Z" fill="#f9e08a" stroke="#b8860f" stroke-width=".9"/><path d="M4.500 5.500 H19.500" stroke="#b8860f" stroke-width=".7"/><text x="4.200" y="13.500" font-family="Liberation Serif, serif" font-size="10.500" font-weight="700" fill="#111" textLength="14.500" lengthAdjust="spacingAndGlyphs">NC</text><rect x="14" y="13.500" width="11.500" height="11.500" fill="#3f72c8" stroke="#2a58ad" stroke-width=".6"/><rect x="16.500" y="13.800" width="6.500" height="4.700" fill="#e6eefb"/><rect x="17" y="20.500" width="5.500" height="4.500" fill="#c8ccd6"/><rect x="18" y="21.300" width="1.600" height="3.200" fill="#3a64b8"/></svg>
<!-- ===== ROW 2 toolbar B (feature ops) ===== -->
<style>.bdg{position:absolute;width:7px;height:7px;background:#1f2f7a;box-shadow:inset 0 0 0 1px #1f2f7a}.bdg:after{content:"";position:absolute;left:1.5px;top:1.5px;width:4px;height:4px;box-sizing:border-box;border:1px solid #fff;background:linear-gradient(180deg,transparent 0 1px,#fff 1px 2px,transparent 2px)}</style>
<!-- hole -->
<svg class="ic" style="left:433px;top:85px" viewBox="0 0 24 24"><path d="M0.500 12.500 L10 5.500 L23.500 10.500 L16.500 18.500Z" fill="#dfe7f8" stroke="#8fa3cc" stroke-width=".5"/><path d="M0.500 12.500 L16.500 18.500 V23.500 L0.500 16.500Z" fill="#9fb3e0"/><path d="M16.500 18.500 L23.500 10.500 V14.500 L16.500 23.500Z" fill="#26366e"/><ellipse cx="8" cy="11" rx="2.800" ry="1.900" fill="#26366e"/><ellipse cx="15.500" cy="13.200" rx="2.800" ry="1.900" fill="#26366e"/><ellipse cx="8" cy="11.700" rx="1.600" ry=".9" fill="#cfd9f2"/><ellipse cx="15.500" cy="13.900" rx="1.600" ry=".9" fill="#cfd9f2"/></svg>
<!-- helix -->
<svg class="ic" style="left:463px;top:85px" viewBox="0 0 24 24" fill="none" stroke="#c8282c" stroke-width="1"><ellipse cx="11.500" cy="5" rx="10" ry="3.600"/><ellipse cx="11.500" cy="10" rx="10.500" ry="3.800"/><ellipse cx="11.500" cy="15" rx="10.500" ry="3.800"/><ellipse cx="11.500" cy="20" rx="10" ry="3.600"/></svg>
<!-- profile slab -->
<svg class="ic" style="left:493px;top:85px" viewBox="0 0 24 24"><path d="M0.500 16 L7 7 L24 12.500 L18 20.500Z" fill="#b8c7ec"/><path d="M7 7 L24 12.500 L23 14 L6 8.500Z" fill="#f2f5fc"/><path d="M6.500 9.500 L22.500 15" stroke="#7f95cc" stroke-width="1.200"/><path d="M0.500 16 L18 20.500 V23.500 L0.500 18.500Z" fill="#e9eefa"/><path d="M18 20.500 L24 12.500 V15 L18 23.500Z" fill="#26366e"/></svg>
<!-- pocket slab -->
<svg class="ic" style="left:523px;top:85px" viewBox="0 0 24 24"><path d="M0.500 13 L8 6 L24 11 L17 19Z" fill="#cfdaf4" stroke="#8fa3cc" stroke-width=".4"/><path d="M6.500 11 L9 9 L18.500 12 L16.500 14.200Z" fill="#5f74b0"/><path d="M7.500 11.500 L17 14.300" stroke="#26366e" stroke-width="1.100"/><path d="M0.500 13 L17 19 V23.500 L0.500 17Z" fill="#9fb3e0"/><path d="M17 19 L24 11 V15 L17 23.500Z" fill="#6f86c0"/></svg>
<!-- arch -->
<svg class="ic" style="left:553px;top:85px" viewBox="0 0 24 24"><path d="M0.500 14.500 C3 9 7 6.500 10 7.500 L24 13 V17.500 L18 20 V16.500 C14 13 9 13.500 6.500 17.500 L0.500 17.500Z" fill="#c9d6f2" stroke="#6f86c0" stroke-width=".7"/><path d="M0.500 14.500 C3 9 7 6.500 10 7.500 L24 13 L18 16.500 C14 13 9 13.500 6.500 17.500 L4 15.500Z" fill="#eef2fb" stroke="#8fa3cc" stroke-width=".4"/><path d="M4 15.500 L6.500 17.500 V19 L3.500 17.500Z" fill="#26366e"/></svg>
<!-- rough (yellow) -->
<svg class="ic" style="left:583px;top:85px" viewBox="0 0 24 24"><path d="M0.500 14 L8 6 L24 11.500 L18 20Z" fill="#c9d6f2"/><path d="M0.500 14 L4 10.500 C6 12 8 9 10 12 C13 10.500 14 14.500 17 13 C19 15 21 13 22 14.500 L18 20Z" fill="#f9e030"/><path d="M4.500 10.500 L6.500 9 L8.500 10.500 L6.500 11.700Z" fill="#1a2450"/><path d="M0.500 14 L18 20 V23.500 L0.500 17Z" fill="#f0b000"/><path d="M18 20 L24 11.500 V14.500 L18 23.500Z" fill="#26366e"/></svg>
<!-- chamfer block -->
<svg class="ic" style="left:613px;top:85px" viewBox="0 0 24 24"><path d="M1 9 L8 1.500 L19 1 L24 6 V20 L18 24 L5 23 L1 17Z" fill="#8fa3d0" stroke="#4a5f95" stroke-width=".5"/><path d="M1 9 L8 1.500 L19 1 L24 6 L15 10Z" fill="#e9eefa"/><path d="M1 9 L15 10 V23.500 L5 23 L1 17Z" fill="url(#gSteelV)"/><path d="M15 10 L24 6 V20 L18 24 L15 23.500Z" fill="#5a6a98"/><path d="M15 17 L24 20 L18 24 L15 23.500Z" fill="#2a3050"/></svg>
<!-- drill on block -->
<svg class="ic" style="left:643px;top:85px" viewBox="0 0 24 24"><path d="M1 12 L12 7 L24 11.500 L13 18Z" fill="#dfe7f8"/><path d="M12 9 L24 11.500 V16 L17 20 L14 14.500Z" fill="#6f7fb0"/><path d="M1 12 L13 18 V23.500 L5 20Z" fill="#b8c7ec" stroke="#6f86c0" stroke-width=".4"/><path d="M13 18 L24 14 V17.500 L13 23.500Z" fill="#3a4a80"/><path d="M4 1 H12.500 L11 15 L7.500 17.500 L5.500 14Z" fill="url(#gGold)" stroke="#5a3500" stroke-width=".4"/><path d="M7 2 L10.500 9 M9.500 1 L11.800 6 M6 8 L9 15" stroke="#2a1a00" stroke-width="1.200"/></svg>
<!-- red striped surface -->
<svg class="ic" style="left:673px;top:85px" viewBox="0 0 24 24"><path d="M0.500 11.500 C4 6 10 3.500 16 2.500 L24 6 C18 8 12 11.500 9 17Z" fill="#d84a3a"/><path d="M3 9 L11.500 13.500 M5.500 7 L14 11 M8.500 5.300 L16.500 9 M11.500 4 L19.500 7.300 M15 3 L22 6" stroke="#fbe6e0" stroke-width="1.300"/><path d="M0.500 11.500 L9 17 V23.500 L2 16.500Z" fill="#c83a2a"/><path d="M9 17 C12 11.500 18 8 24 6 V13 C18 16 13 19.500 9 23.500Z" fill="#1f2444"/></svg>
<!-- blue hex -->
<svg class="ic" style="left:703px;top:85px" viewBox="0 0 24 24"><rect x="0.500" y="0.500" width="23.500" height="23" fill="#7f9fe0"/><path d="M3.500 5 L12 1.500 L20.500 5 V16 L12 20.500 L3.500 16Z" fill="#9fb8ec" stroke="#1f2f7a" stroke-width=".8"/><path d="M12 20.500 V24" stroke="#1f2f7a" stroke-width=".8"/><path d="M10.500 1.500 V11.500 L4 15 M13.500 1.500 V11.500 L20 15 M12 2 V12.500 M5 17 L12 13.500 L19 17" fill="none" stroke="#d02838" stroke-width=".9"/></svg>
<!-- yellow T + blue arrow -->
<svg class="ic" style="left:733px;top:85px" viewBox="0 0 24 24"><path d="M1.500 14 C5 22 13 24 19 21 L19 24 L24 24 V12.500 L15 17 L18 18 C13 20.500 7 18.500 5.500 13Z" fill="#2f62c0" stroke="#1a3f90" stroke-width=".5"/><path d="M6 4.500 L11 1 L17.500 3 V9.500 L23 11 V14 L16 18.500 L1.500 14 V11.500 L6 10Z" fill="#f9d800" stroke="#c89800" stroke-width=".5"/><path d="M6 4.500 L11 1 L17.500 3 L12.500 6Z" fill="#fdf090"/><path d="M12.500 6 L17.500 3 V9.500 L12.500 12.500Z" fill="#e0a800"/><path d="M16 15.500 L23 11 V14 L16 18.500Z" fill="#d89800"/></svg>
<!-- clock + list -->
<svg class="ic" style="left:763px;top:84px;width:26px;height:26px" viewBox="0 0 26 26"><circle cx="10" cy="10.500" r="9" fill="#f2f5fb" stroke="#e0b020" stroke-width="2.200"/><path d="M10 3.500 V5 M10 16 V17.500 M3 10.500 H4.500 M15.500 10.500 H17" stroke="#6f86c0" stroke-width="1"/><path d="M6 7 L10.500 11 L6 14.500" fill="none" stroke="#3a5aa8" stroke-width="1.600"/><rect x="12.500" y="11" width="12" height="13.500" fill="#f7f9fd" stroke="#1f2f7a" stroke-width="1"/><path d="M17.500 14.500 H23 M17.500 18 H23 M17.500 21.500 H23" stroke="#1f2f7a" stroke-width="1.200"/><path d="M13.800 14.500 H16.500 M13.800 18 H16.500 M13.800 21.500 H16.500 M15.200 13.300 V15.700 M15.200 16.800 V19.200 M15.200 20.300 V22.700" stroke="#1f2f7a" stroke-width=".9"/></svg>
<!-- badges on toolbar B -->
<div class="bdg" style="left:450px;top:85px"></div><div class="bdg" style="left:480px;top:85px"></div><div class="bdg" style="left:510px;top:85px"></div><div class="bdg" style="left:540px;top:85px"></div><div class="bdg" style="left:570px;top:85px"></div><div class="bdg" style="left:600px;top:85px"></div><div class="bdg" style="left:630px;top:85px"></div><div class="bdg" style="left:660px;top:85px"></div><div class="bdg" style="left:690px;top:85px"></div><div class="bdg" style="left:720px;top:85px"></div><div class="bdg" style="left:750px;top:85px"></div>
<!-- ===== ROW 2 toolbar C ===== -->
<!-- angle -->
<svg class="ic" style="left:831px;top:84px;width:26px;height:26px" viewBox="0 0 26 26"><path d="M1.500 23.500 H24.500" stroke="#1f4fa8" stroke-width="2.200"/><path d="M2 23 L19 5" stroke="#1f4fa8" stroke-width="3.400"/><path d="M2 23 L19 5" stroke="#5f93df" stroke-width="1.400"/><path d="M13.500 2 H23.500 V12 Z" fill="#4f86d8" stroke="#1f4fa8" stroke-width=".8"/><path d="M9 16 C13 16.500 16 19.500 16.500 23.500" fill="none" stroke="#1f4fa8" stroke-width="1.600"/></svg>
<!-- drill+block+red arrows (hot) -->
<svg class="ic" style="left:862px;top:85px" viewBox="0 0 24 24"><path d="M1 14 L13 8 L23.500 4 V14 L12 20 L1 19Z" fill="#9fb0d8" stroke="#4a5f95" stroke-width=".4"/><path d="M13 8 L23.500 4 L23.500 8 L14 12Z" fill="#dfe6f5"/><path d="M1 14 L6 11.500 L14 12 L12 16 L3 17Z" fill="#e6ecf8"/><path d="M12 16 L23.500 10 V14 L12 20Z" fill="#5a6a98"/><path d="M4 0.500 H13 L12 12 L9 14.500 L5.500 12Z" fill="url(#gGold)" stroke="#5a3500" stroke-width=".4"/><path d="M5 1 L7.500 1 L6 9 L4.800 7Z M9.500 0.800 L12.500 0.800 L11 8Z" fill="#1a1205"/><path d="M0.500 18 L8 20 L10 18.500 L14 18.500 L16 20 L23.500 18 V24 H0.500Z" fill="#c01808"/><path d="M8.500 21 H15.500 M8.500 21 l2 -1.500 v3z M15.500 21 l-2 -1.500 v3z" stroke="#f9d060" stroke-width=".8" fill="#f9d060"/></svg>
<!-- rotate + drill + cylinder -->
<svg class="ic" style="left:893px;top:85px" viewBox="0 0 24 24"><path d="M9 9 L20 5.500 C23 5 24 7 24 9 V14 C24 16 22 16.500 20 17 L11 20Z" fill="url(#gSteelV)" stroke="#5a6a98" stroke-width=".4"/><ellipse cx="11" cy="14.500" rx="3.500" ry="5.500" fill="#cfd9f0" stroke="#6f7fb0" stroke-width=".5"/><path d="M16 9 H21 V12 H16Z M16 14 L21 13 V15.500 L16 16.500Z" fill="#7f8fb8" opacity=".7"/><path d="M10 0.500 H17.500 L16.500 8 L14 10 L11 8Z" fill="url(#gGold)" stroke="#5a3500" stroke-width=".4"/><path d="M11 1 L13 1 L12 5Z M14.500 0.800 L17 0.800 L15.500 6Z" fill="#1a1205"/><path d="M9.500 20.500 C4 22 0.500 18 1.500 13.500 C2.500 9.500 7 8.500 9.500 11" fill="none" stroke="#a01008" stroke-width="3.600"/><path d="M9.500 20.500 C4 22 0.500 18 1.500 13.500 C2.500 9.500 7 8.500 9.500 11" fill="none" stroke="#d83020" stroke-width="2"/><path d="M6 17.500 L12.500 19 L8 24Z" fill="#c82010" stroke="#800800" stroke-width=".5"/></svg>
<!-- ===== ROW 2 toolbar D ===== -->
<!-- surface + drill -->
<svg class="ic" style="left:945px;top:85px" viewBox="0 0 24 24"><path d="M0.500 14.500 C5 14.500 9 11 11 5.500 L23 12 C21 17 20 19.500 18 23.500 C12 17 6 15.500 0.500 16Z" fill="#8fa3d8" stroke="#4a5f95" stroke-width=".5"/><path d="M18 23.500 C20 19.500 21.500 16 23.500 12 V10 L17 18Z" fill="#2a3050"/><path d="M7.500 0.500 L16 0.500 L20.500 11 L19 15 L15 14.500Z" fill="url(#gGold)" stroke="#5a3500" stroke-width=".4"/><path d="M13 6 L17.500 13.500 L19.500 11.500 L16 4Z" fill="#2a1a00" opacity=".7"/><path d="M15 9 C17 9.500 18 11.500 17.500 14" stroke="#fff0a0" stroke-width="1" fill="none"/></svg>
<!-- blue box red stripes + drill -->
<svg class="ic" style="left:975px;top:85px" viewBox="0 0 24 24"><path d="M1 7.500 L13 3 V17 L8 23 L1 19.500Z" fill="#cfe0f8" stroke="#2a62c0" stroke-width=".8"/><path d="M13 3 L13 17 L23 14.500 V19 L8 23.500 L8 23 L13 17" fill="#5f9fe8" stroke="#2a62c0" stroke-width=".6"/><path d="M4 9 L13 6.500 M4 11.500 L13 9 M4 14 L13 11.500 M4 16.500 L13 14" stroke="#d84040" stroke-width="1.300"/><path d="M4 10.300 L13 7.800 M4 12.800 L13 10.300 M4 15.300 L13 12.800" stroke="#6fa0e8" stroke-width="1.100"/><path d="M16.500 0.500 L24 0.500 L19 12.500 L15.500 14.500 L14 12Z" fill="url(#gGold)" stroke="#5a3500" stroke-width=".4"/><path d="M19 2 L16 10 L17.500 11 L21 3Z" fill="#2a1a00" opacity=".75"/></svg>
<!-- surface + drill + red arrow -->
<svg class="ic" style="left:1013px;top:85px" viewBox="0 0 24 24"><path d="M3.500 9 C7 9.500 10 8 12 5 L21.500 8.500 C20 12 19.500 14 21 17 L14.500 16 C10 15 6 16 3 18 C5 15 5 12 3.500 9Z" fill="#8fa3d8" stroke="#4a5f95" stroke-width=".5"/><path d="M3 18 C6 16 10 15 14.500 16 L21 17 L22 19 L2 20Z" fill="#2a3050"/><path d="M8.500 0.500 H14.500 V9 L11.500 11.500 L8.500 9Z" fill="url(#gGold)" stroke="#5a3500" stroke-width=".4"/><path d="M10 1 L11.500 1 L10.500 8 L9.500 7Z" fill="#2a1a00"/><path d="M2.500 23.500 C5 18.500 11 17 16 20" fill="none" stroke="#1a0a08" stroke-width="3.400"/><path d="M2.500 23.500 C5 18.500 11 17 16 20" fill="none" stroke="#d01810" stroke-width="2"/><path d="M14 16.500 L21.500 17.500 L21.500 24 L12 24Z" fill="#d01810" stroke="#1a0a08" stroke-width=".7"/></svg>
<!-- tray + drill -->
<svg class="ic" style="left:1043px;top:85px" viewBox="0 0 24 24"><path d="M0.500 11.500 L12 6.500 L23.500 13.500 L9 20Z" fill="#9fb3e8" stroke="#3a4f95" stroke-width=".5"/><path d="M5 12 L11.500 9 L18 13 L10 16.500Z" fill="#e6ecfa"/><path d="M5 12 L10 16.500 L9 18 L3.500 12.500Z" fill="#26366e"/><path d="M0.500 11.500 L9 20 V24 L2.500 16Z" fill="#7f93d0"/><path d="M9 20 L23.500 13.500 V17 L9 24Z" fill="#5a70b0"/><path d="M4 0.500 H11 L15.500 11 L13.500 13.500 L10 12.500Z" fill="url(#gGold)" stroke="#5a3500" stroke-width=".4"/><path d="M8 2 L12 11.500 L13.500 10.500 L10 2Z" fill="#2a1a00" opacity=".75"/></svg>
<!-- surface + drill (badge) -->
<svg class="ic" style="left:1073px;top:85px" viewBox="0 0 24 24"><path d="M0.500 15.500 C5 15 8.500 12 10 6.500 L20 11.500 C19 16.500 18.500 19 17 23.500 C12 18 6 16.500 0.500 17Z" fill="#8fa3d8" stroke="#4a5f95" stroke-width=".5"/><path d="M17 23.500 C18.500 19.500 19.500 16 20 11.500 L24 10.500 V13 L18 22Z" fill="#2a3050"/><path d="M7 0.500 L15.500 0.500 L19 11.500 L17.500 15.500 L14 14.500Z" fill="url(#gGold)" stroke="#5a3500" stroke-width=".4"/><path d="M11 2 L15 13 L16.500 12 L13 2Z" fill="#2a1a00" opacity=".7"/><path d="M18 10 L22 9 L21.500 13 L18.500 15Z" fill="#e8c020"/></svg>
<!-- yellow/white slab -->
<svg class="ic" style="left:1103px;top:85px" viewBox="0 0 24 24"><path d="M0.500 13.500 L8 6.500 L24 11.500 L18 19.500Z" fill="#f4f4f8" stroke="#b0b0c0" stroke-width=".4"/><path d="M0.500 13.500 L2.500 11.800 C8 14 14 16 19.500 17.500 L18 19.500Z" fill="#f9d848"/><path d="M2.500 11.800 C8 14 14 16 19.500 17.500" stroke="#d84040" stroke-width=".7" fill="none"/><path d="M0.500 13.500 L18 19.500 V23.500 L0.500 16.500Z" fill="url(#gYel)"/><path d="M0.500 16.800 L18 23.500" stroke="#fff" stroke-width="1.200"/><path d="M18 19.500 L24 11.500 V15 L18 23.500Z" fill="#1f2444"/></svg>
<!-- surface red edge + drill -->
<svg class="ic" style="left:1133px;top:85px" viewBox="0 0 24 24"><path d="M0.500 15 C5 14.500 8.500 11.500 10 6 L20 11 C19 16 18.500 18.500 17 23 C12 17.500 6 16 0.500 16.500Z" fill="#8fa3d8" stroke="#4a5f95" stroke-width=".5"/><path d="M0.500 15.500 C6 15 12 17 17 23.500" fill="none" stroke="#e05040" stroke-width="2"/><path d="M17 23.500 C18.500 19.500 19.500 16 20 11.500 L24 10.500 V13 L18 22Z" fill="#3a2420"/><path d="M7 0.500 L15.500 0.500 L19 11.500 L17.500 15.500 L14 14.500Z" fill="url(#gGold)" stroke="#5a3500" stroke-width=".4"/><path d="M11 2 L15 13 L16.500 12 L13 2Z" fill="#2a1a00" opacity=".7"/><path d="M18 10 L22 9 L21.500 13 L18.500 15Z" fill="#e8c020"/></svg>
<!-- surface + gold ball -->
<svg class="ic" style="left:1163px;top:85px" viewBox="0 0 24 24"><path d="M0.500 15.500 C5 15 8.500 12 10.500 7.500 L21 12 C20 16.500 19.500 19 18 23.500 C13 18 6.500 16.500 0.500 17Z" fill="#8fa3d8" stroke="#4a5f95" stroke-width=".5"/><path d="M18 23.500 C19.500 19.500 20.500 16 21 12 L23 13 L19 22.500Z" fill="#3a4670"/><ellipse cx="18.500" cy="7" rx="5.500" ry="6.500" transform="rotate(25 18.500 7)" fill="url(#gGold)" stroke="#6a4000" stroke-width=".5"/><path d="M14 6.500 L22.500 3.500 M14 9.500 L23.500 6.500 M15.500 12 L23 9.500" stroke="#5a3500" stroke-width="1"/></svg>
<div class="bdg" style="left:1031px;top:85px"></div><div class="bdg" style="left:1061px;top:85px"></div><div class="bdg" style="left:1091px;top:85px"></div><div class="bdg" style="left:1121px;top:85px"></div><div class="bdg" style="left:1151px;top:85px"></div>
<!-- ===== LEFT PANEL 1: Útvary ===== -->
<div class="a" style="left:0;top:114px;width:229px;height:20px;background:#f4f8fc"></div><div class="a" style="left:1px;top:115px;width:227px;height:19px;background:linear-gradient(180deg,#8aa6c8 0,#8fabcc 50%,#94afcf 100%)"></div>
<div class="t" style="left:4px;top:118px;font-size:12px;color:#0a1a3a;letter-spacing:-.2px">Útvary</div>
<svg style="left:196.500px;top:118px" width="30" height="14" viewBox="0 0 30 14"><path d="M3.500 2 H8.500 M4.500 2 V7.500 M7.500 2 V7.500 M2.500 7.500 H9.500 M6 7.500 V12" stroke="#1a2a4a" stroke-width="1.200" fill="none"/><path d="M19 2.500 L26 10.500 M26 2.500 L19 10.500" stroke="#1a2a4a" stroke-width="1.500"/></svg>
<!-- yellow frame -->
<div class="a" style="left:1px;top:134px;width:227px;height:390px;background:#f6edc4"></div>
<div class="a" style="left:1px;top:134px;width:227px;height:1px;background:#e6d89a"></div>
<!-- panel toolbar -->
<div class="a" style="left:4px;top:138px;width:222px;height:23px;background:linear-gradient(180deg,#eef0f4 0,#e4e6ec 40%,#d2d5dd 75%,#c6c9d2 100%)"></div>
<div class="a" style="left:4px;top:160px;width:222px;height:1px;background:#a9adb8"></div>
<!-- tree white -->
<div class="a" style="left:4px;top:161px;width:222px;height:361px;background:#fff"></div>
<div class="a" style="left:3px;top:138px;width:1px;height:384px;background:#d8c98a"></div>
<div class="a" style="left:226px;top:138px;width:1px;height:384px;background:#e9dca0"></div>
<div class="a" style="left:3px;top:521px;width:224px;height:1px;background:#cbb878"></div>
<!-- panel toolbar icons (16px, centre y=149) -->
<svg style="left:8px;top:140px" width="18" height="18" viewBox="0 0 18 18"><path d="M1.500 2.500 H7.500 V8.500 H1.500Z M3 1 H9 V7" fill="#c9d6e8" stroke="#8f9fba" stroke-width=".9"/><path d="M8.500 8.500 H14.500 V14.500 H8.500Z M10 7 H16 V13" fill="#c9d6e8" stroke="#8f9fba" stroke-width=".9"/><path d="M4.500 8.500 V16.500 M4.500 11.500 H8.500" stroke="#8f9fba" stroke-width=".9" fill="none"/></svg>
<svg style="left:30px;top:140px" width="16" height="18" viewBox="0 0 16 18"><rect x="4" y="2.200" width="7" height="6" rx="1" fill="#bcd0f0" stroke="#14206a" stroke-width="1.600"/><rect x="4" y="10" width="7" height="6" rx="1" fill="#bcd0f0" stroke="#14206a" stroke-width="1.600"/><path d="M5 1.500 L7 0.500 H13 V14.500 L11.500 16" fill="none" stroke="#14206a" stroke-width="1.300"/></svg>
<div class="a" style="left:52px;top:141px;width:16px;height:16px;background:#a63a14"></div>
<svg style="left:52px;top:141px" width="16" height="16" viewBox="0 0 16 16"><path d="M2.500 4.500 L4 14.500 C6 15.800 10 15.800 12 14.500 L13.500 4.500Z" fill="url(#gBin)" stroke="#5f83b8" stroke-width=".6"/><ellipse cx="8" cy="4.200" rx="5.800" ry="2" fill="#e9f2fc" stroke="#5f83b8" stroke-width=".7"/><path d="M5.500 3 C5.500 0.800 10.500 0.800 10.500 3" fill="none" stroke="#dfe9f8" stroke-width="1.100"/><defs><linearGradient id="gBin" x1="0" y1="0" x2="1" y2="0"><stop offset="0" stop-color="#6f9bd4"/><stop offset=".45" stop-color="#eaf3fd"/><stop offset="1" stop-color="#5f8bc8"/></linearGradient></defs></svg>
<div class="sep" style="left:74px;top:142px;height:14px"></div>
<svg style="left:81px;top:140px" width="18" height="18" viewBox="0 0 18 18"><path d="M7 3 L12.500 8.500 L7 14.500 L1.500 8.500Z" fill="#fff" stroke="#111" stroke-width="1.400"/><path d="M6 10.500 L8.500 13 L15.500 2.500" fill="none" stroke="#3f66b0" stroke-width="2"/></svg>
<svg style="left:103px;top:140px" width="18" height="18" viewBox="0 0 18 18"><rect x="2.500" y="2" width="10" height="3" rx="1.500" fill="#fff" stroke="#14206a" stroke-width="1.400"/><rect x="2.500" y="7" width="10" height="3" rx="1.500" fill="#fff" stroke="#14206a" stroke-width="1.400"/><rect x="2.500" y="12" width="10" height="3" rx="1.500" fill="#fff" stroke="#14206a" stroke-width="1.400"/><path d="M12 5 L16 8.500 L12 12Z" fill="#3f66b0" stroke="#14206a" stroke-width=".6"/></svg>
<svg style="left:125px;top:140px" width="18" height="18" viewBox="0 0 18 18"><path d="M7 2.500 L12.500 8.500 L7 14.500 L1.500 8.500Z" fill="#fff" stroke="#111" stroke-width="1.400"/><path d="M11 4 L16 8.500 L11 13Z" fill="#4f7fd0" stroke="#2a4f9c" stroke-width=".6"/></svg>
<svg style="left:149px;top:140px" width="18" height="18" viewBox="0 0 18 18"><path d="M3 2 V15 M1 12.500 L3 15.500 L5 12.500 M7 1 V5" stroke="#9aa3b5" stroke-width="1.100" fill="none"/><rect x="6" y="5.500" width="9" height="10" fill="#dfe8f5" stroke="#8fa3c8" stroke-width="1"/><path d="M6 7.500 H15" stroke="#8fa3c8" stroke-width="1.600"/><path d="M9.500 10 H12.500 M9.500 12.500 H12.500" stroke="#8fa3c8" stroke-width="1"/></svg>
<div class="t" style="left:173px;top:142px;font-size:13px;color:#9aa0ae">#</div>
<svg style="left:191px;top:140px" width="18" height="18" viewBox="0 0 18 18"><path d="M5.500 2 V15 M3.500 12.500 L5.500 15.500 L7.500 12.500 M11.500 16 V3 M9.500 5.500 L11.500 2.500 L13.500 5.500" stroke="#8a909e" stroke-width="1.100" fill="none"/></svg>
<div class="a" style="left:211px;top:139px;width:15px;height:21px;border:1px solid #d9b06a;border-right:none;border-radius:3px 0 0 3px;box-sizing:border-box;background:linear-gradient(180deg,#fbd9a8 0,#f8b95c 45%,#f5a63c 50%,#fbd288 100%)"></div>
<svg style="left:212px;top:141px" width="14" height="18" viewBox="0 0 14 18"><path d="M13 1.500 L8 4 L13 6" fill="none" stroke="#14206a" stroke-width="1.200"/><rect x="3.500" y="10" width="6" height="6" rx="1" fill="#c9e6f5" stroke="#0a1040" stroke-width="1.400"/><path d="M4.500 9.500 L6.500 8 H11.500 V13.500 L10 15.500" fill="none" stroke="#0a1040" stroke-width="1.200"/></svg>
<!-- tree rows -->
<style>.tr{position:absolute;font-size:11px;color:#000;white-space:pre;line-height:1}.tw{position:absolute;width:0;height:0;border-left:5.5px solid transparent;border-bottom:5.5px solid #404040}</style>
<div class="tw" style="left:9px;top:168.500px"></div>
<div class="tw" style="left:25px;top:187.500px"></div>
<div class="tr" style="left:45px;top:167px">4osy</div>
<div class="tr" style="left:61px;top:186px;letter-spacing:-.4px">CPL0</div>
<div class="tr" style="left:80px;top:205px;letter-spacing:.1px">Řídící profil</div>
<div class="tr" style="left:64px;top:224px;letter-spacing:.1px">Plocha</div>
<div class="tr" style="left:45px;top:243px;letter-spacing:.1px">Polotovar</div>
<!-- tree icons -->
<svg style="left:26px;top:162px" width="16" height="16" viewBox="0 0 16 16"><path d="M1.300 3.600 L5.800 1.400 L9 3 V10 L4.500 13 L1.300 11.500Z" fill="#dfe8f8" stroke="#8fa3cc" stroke-width=".5"/><path d="M5.800 1.400 L10 1.200 L10.500 6 L9 6.500 V3Z" fill="#2a3f80"/><path d="M5.800 1.400 L10 1.200 L9 3 Z" fill="#4a63a8"/><path d="M7 8 L10.500 6 L15 9 L11.800 11.500Z" fill="#4a63a8"/><path d="M7 8 L11.800 11.500 V14.500 L7 13.500Z" fill="#c9d6ee"/><path d="M11.800 11.500 L15 9 V11.500 L11.800 14.500Z" fill="#1f2c5a"/><path d="M1.300 3.600 L4.500 5.200 V13" fill="none" stroke="#b8c7e6" stroke-width=".5"/></svg>
<svg style="left:42px;top:181px" width="17" height="17" viewBox="0 0 17 17"><circle cx="7.500" cy="8.500" r="5.800" fill="#fff" stroke="#111" stroke-width="1.200"/><path d="M7.500 8.500 V1" stroke="#20c020" stroke-width="1.600"/><path d="M7.500 8.500 H14.500" stroke="#e01818" stroke-width="1.600"/><path d="M12.500 7 L15.500 8.500 L12.500 10Z" fill="#e01818"/><rect x="6" y="7.500" width="3" height="2.400" fill="#1a1ad0"/></svg>
<svg style="left:57px;top:200px" width="19" height="16" viewBox="0 0 19 16"><path d="M1.500 5 Q5 1.500 9.500 1 Q14 1 16.800 3.200 L17 10.300 Q13 13 8.700 14.300 Q5.500 13.500 3.300 11.500Z" fill="#1a2448"/><path d="M2.400 5.300 Q5.500 2.300 9.500 2 Q13.500 2 16 3.700 Q13 7.200 8.600 9.600 Q5 8.700 3.300 7.900Z" fill="url(#gSurf)"/><path d="M9.800 2 Q8.800 5.500 8.800 9.400 M2.900 6.800 Q9 6.300 15.800 4.200" fill="none" stroke="#1a2448" stroke-width="1.800"/><path d="M3.500 9.500 Q6 11 8.700 11.200 Q13 9.500 16.500 6.500" fill="none" stroke="#5a6a98" stroke-width=".6"/><defs><linearGradient id="gSurf" x1="0" y1="0" x2="1" y2="1"><stop offset="0" stop-color="#ffffff"/><stop offset=".6" stop-color="#cfd9f0"/><stop offset="1" stop-color="#7f93c8"/></linearGradient></defs></svg>
<svg style="left:41px;top:219px" width="19" height="16" viewBox="0 0 19 16"><path d="M1.500 5 Q5 1.500 9.500 1 Q14 1 16.800 3.200 L17 10.300 Q13 13 8.700 14.300 Q5.500 13.500 3.300 11.500Z" fill="#1a2448"/><path d="M2.400 5.300 Q5.500 2.300 9.500 2 Q13.500 2 16 3.700 Q13 7.200 8.600 9.600 Q5 8.700 3.300 7.900Z" fill="url(#gSurf)"/><path d="M9.800 2 Q8.800 5.500 8.800 9.400 M2.900 6.800 Q9 6.300 15.800 4.200" fill="none" stroke="#1a2448" stroke-width="1.800"/><path d="M3.500 9.500 Q6 11 8.700 11.200 Q13 9.500 16.500 6.500" fill="none" stroke="#5a6a98" stroke-width=".6"/></svg>
<svg style="left:25px;top:239px" width="18" height="15" viewBox="0 0 18 15"><path d="M1 4.500 L7 1 L17 3 V10.500 L11 14.500 L1 11.500Z" fill="#f9cf80" stroke="#e0a040" stroke-width=".6"/><path d="M1 4.500 L11 7 L17 3 M11 7 V14.500" fill="none" stroke="#e0a040" stroke-width=".6"/><path d="M1 4.500 L7 1 V8 L1 11.500Z" fill="#f4b860" opacity=".7"/><path d="M7 8 L17 10.500 L11 14.500 L1 11.500Z" fill="#fde6b8"/></svg>
<!-- h scrollbar of tree -->
<div class="a" style="left:4px;top:504px;width:222px;height:17px;background:#f0f0f0"></div>
<div class="a" style="left:22px;top:505px;width:183px;height:15px;box-sizing:border-box;border:1px solid #979797;border-radius:2px;background:linear-gradient(180deg,#f4f4f4 0,#e6e6e6 45%,#d2d2d2 50%,#c4c4c4 100%);box-shadow:inset 0 0 0 1px rgba(255,255,255,.6)"></div>
<div class="a" style="left:109px;top:509px;width:7px;height:7px;background:repeating-linear-gradient(90deg,#5a5a5a 0 1px,#fff 1px 2px,transparent 2px 3px)"></div>
<div class="a" style="left:9px;top:508px;border:4px solid transparent;border-right:5px solid #3a3a3a;border-left:none"></div>
<div class="a" style="left:214px;top:508px;border:4px solid transparent;border-left:5px solid #3a3a3a;border-right:none"></div>
<!-- tabs strip 1 -->
<div class="a" style="left:0;top:523px;width:229px;height:24px;background:linear-gradient(180deg,#e6e8ee 0,#dadde5 50%,#d0d4dc 100%)"></div>
<svg style="left:0;top:523.500px" width="232" height="24" viewBox="0 0 232 24">
<defs><linearGradient id="tbW" x1="0" y1="0" x2="0" y2="1"><stop offset="0" stop-color="#cfdcf2"/><stop offset=".5" stop-color="#eef3fb"/><stop offset="1" stop-color="#fafcfe"/></linearGradient>
<linearGradient id="tbY" x1="0" y1="0" x2="0" y2="1"><stop offset="0" stop-color="#fcd77a"/><stop offset=".5" stop-color="#fde892"/><stop offset="1" stop-color="#fdf0b0"/></linearGradient>
<linearGradient id="tbR" x1="0" y1="0" x2="0" y2="1"><stop offset="0" stop-color="#f4a3a3"/><stop offset="1" stop-color="#f6c4c0"/></linearGradient>
<linearGradient id="tbP" x1="0" y1="0" x2="0" y2="1"><stop offset="0" stop-color="#c9a9ea"/><stop offset="1" stop-color="#dcc9f2"/></linearGradient>
<linearGradient id="tbG" x1="0" y1="0" x2="0" y2="1"><stop offset="0" stop-color="#a3d0b8"/><stop offset="1" stop-color="#c9e4d6"/></linearGradient></defs>
<path d="M176 1 H222 L212 19 Q210.500 21.500 207 21.500 H191 Q187.500 21.500 186 19Z" fill="url(#tbG)" stroke="#b8c8c0" stroke-width=".6"/>
<path d="M133 1 H180 L170 19 Q168.500 21.500 165 21.500 H148 Q144.500 21.500 143 19Z" fill="url(#tbP)" stroke="#c0b0d0" stroke-width=".6"/>
<path d="M90 1 H138 L128 19 Q126.500 21.500 123 21.500 H105 Q101.500 21.500 100 19Z" fill="url(#tbR)" stroke="#d0b0b0" stroke-width=".6"/>
<path d="M3 1 H50 L44 19 Q42.500 21.500 39 21.500 H18 Q14.500 21.500 13 19Z" fill="url(#tbW)" stroke="#b0b8c8" stroke-width=".6"/>
<path d="M44 1 H96 L86 19 Q84.500 21.500 81 21.500 H59 Q55.500 21.500 54 19Z" fill="url(#tbY)" stroke="#d8c080" stroke-width=".6"/>
<!-- tab icons -->
<g><rect x="17.500" y="4.500" width="5.500" height="7" fill="#fff" stroke="#111" stroke-width="1"/><rect x="19.500" y="6.500" width="5.500" height="7" fill="#fff" stroke="#111" stroke-width="1"/><rect x="21.500" y="8.500" width="5.500" height="8" fill="#fff" stroke="#111" stroke-width="1"/></g>
<g><rect x="59" y="6" width="6" height="7" rx="1" fill="#9fc0e8" stroke="#0a1040" stroke-width="1.300"/><path d="M60 5.500 L61.500 4.500 H66.500 V11 L65.500 12.500" fill="none" stroke="#0a1040" stroke-width="1"/></g>
<g><rect x="98" y="5" width="15" height="10.500" fill="#bcd7f5" stroke="#2a62c0" stroke-width="1"/><rect x="98.500" y="12.500" width="14" height="2.500" fill="#f2f6fc"/><rect x="102" y="7" width="5" height="5" fill="#2a58ad"/><rect x="103.500" y="8.200" width="2" height="2.400" fill="#dfe9fb"/><rect x="108" y="6.500" width="3.500" height="3" fill="#111"/></g>
<g><rect x="144.500" y="5.500" width="6" height="9.500" rx="1" fill="#e0e0e0" stroke="#111" stroke-width="1.400"/><path d="M150.500 6.500 H152.500 V8.500 H150.500 M150.500 10 H152.500 V12 H150.500" stroke="#111" stroke-width="1" fill="#fff"/></g>
<g><rect x="187.500" y="4.500" width="7" height="10" fill="#fff" stroke="#111" stroke-width="1"/><path d="M189 6.500 H193 M189 8.500 H193 M189 10.500 H193 M189 12.500 H193" stroke="#1a1ad0" stroke-width=".9"/></g>
</svg>
<div class="t" style="left:31px;top:530px;font-size:11px;color:#0a1a3a">V...</div>
<div class="t" style="left:73px;top:530px;font-size:11px;color:#0a1a3a">Ú..</div>
<div class="t" style="left:116px;top:530px;font-size:11px;color:#0a1a3a">K...</div>
<div class="t" style="left:158px;top:530px;font-size:11px;color:#0a1a3a">U..</div>
<div class="t" style="left:199px;top:530px;font-size:11px;color:#0a1a3a">P...</div>
<!-- ===== LEFT PANEL 2: Informace ===== -->
<div class="a" style="left:1px;top:552px;width:227px;height:19px;background:linear-gradient(180deg,#bccde2 0,#cbd9ea 40%,#dbe6f3 100%)"></div>
<div class="t" style="left:4px;top:555.500px;font-size:11.500px;color:#5a6a80;letter-spacing:0">Informace</div>
<svg style="left:196.500px;top:555px" width="30" height="14" viewBox="0 0 30 14"><path d="M3.500 2 H8.500 M4.500 2 V7.500 M7.500 2 V7.500 M2.500 7.500 H9.500 M6 7.500 V12" stroke="#1a2a4a" stroke-width="1.200" fill="none"/><path d="M19 2.500 L26 10.500 M26 2.500 L19 10.500" stroke="#1a2a4a" stroke-width="1.500"/></svg>
<div class="a" style="left:1px;top:571px;width:227px;height:426px;background:#f6edc4"></div>
<div class="a" style="left:3px;top:574px;width:224px;height:422px;box-sizing:border-box;border:1px solid #d8c98a;background:#fff;overflow:hidden" id="infobox">
<style>#infobox div{position:absolute;left:1px;white-space:pre;font-size:11px;line-height:13px;color:#000;letter-spacing:-.06px}#infobox b{font-weight:700;letter-spacing:-.02px}</style>
<div style="top:6px;left:22px"><b>Informace k prvkům</b></div>
<div style="top:19px">Těleso: 63</div>
<div style="top:32px">Vrstva: 4osy - 001  Barva: Zlatá hříva(23)  Typ čáry: Plná</div>
<div style="top:45px">Co-ordinate System : Pracovní CPL</div>
<div style="top:58px">Rovinný Stěna</div>
<div style="top:71px">Umístění :  X       0.000 Y     -27.500 Z       0.000</div>
<div style="top:84px">Normála :  X      -1.000 Y       0.000 Z      -0.000</div>
<div style="top:97px">RGB: 12632256 (192, 192, 192)</div>
<div style="top:110px">Je nezávislý</div>
<div style="top:141px;left:23px"><b>Vzdálenost</b></div>
<div style="top:154px">První bod        : X       0.000 Y      27.500 Z</div>
<div style="top:167px">Druhý bod         : X     190.000 Y     -11.456 Z</div>
<div style="top:180px">Vzdálenost       : X     190.000 Y     -38.956 Z</div>
<div style="top:193px">Vzdálenost v rovině:  193.953</div>
<div style="top:206px">Vzdálenost v prostoru:  194.017</div>
<div style="top:219px">Co-ordinate System : Pracovní CPL</div>
<div style="top:250px;left:23px"><b>Upozornění: uživatelsky definovaný počátek</b></div>
<div style="top:263px">Počátek CPL stroje nebude automaticky umístěn</div>
<div style="top:281px;left:23px"><b>Upozornění: uživatelsky definovaný počátek</b></div>
<div style="top:294px">Počátek CPL stroje nebude automaticky umístěn</div>
<div style="top:312px;left:23px"><b>Upozornění: uživatelsky definovaný počátek</b></div>
<div style="top:325px">Počátek CPL stroje nebude automaticky umístěn</div>
</div>
<!-- info icons -->
<svg style="left:5px;top:575px" width="16" height="16" viewBox="0 0 16 16"><circle cx="8" cy="8" r="7.300" fill="url(#gInfoL)" stroke="#9fb8d8" stroke-width=".8"/><text x="8" y="13" text-anchor="middle" font-family="Liberation Serif, serif" font-size="14" font-weight="700" fill="#1a2ac0">i</text><defs><radialGradient id="gInfoL" cx=".4" cy=".3" r=".8"><stop offset="0" stop-color="#fff"/><stop offset="1" stop-color="#c4d9f2"/></radialGradient></defs></svg>
<svg style="left:5px;top:712px" width="16" height="14" viewBox="0 0 16 14"><path d="M2.500 2.500 L12.500 11" stroke="#1a1ac0" stroke-width="1"/><path d="M1 3.500 L4 1.500 M11 12 L14 10" stroke="#1a1ac0" stroke-width="1"/><path d="M2.500 2.500 l3 .5 l-2 2z M12.500 11 l-3 -.5 l2 -2z" fill="#1a1ac0"/></svg>
<svg style="left:4px;top:820px" width="18" height="16" viewBox="0 0 18 16"><path d="M9 0.800 L16.500 8 L9 15.200 L1.500 8Z" fill="#f4e22a" stroke="#b8a800" stroke-width="1"/><path d="M9 1.800 L15.500 8 L9 14.200 L2.500 8Z" fill="none" stroke="#fbf28a" stroke-width=".6"/><rect x="8.200" y="4" width="1.700" height="5.200" fill="#111"/><rect x="8.200" y="10.200" width="1.700" height="1.700" fill="#111"/></svg>
<svg style="left:4px;top:851px" width="18" height="16" viewBox="0 0 18 16"><path d="M9 0.800 L16.500 8 L9 15.200 L1.500 8Z" fill="#f4e22a" stroke="#b8a800" stroke-width="1"/><path d="M9 1.800 L15.500 8 L9 14.200 L2.500 8Z" fill="none" stroke="#fbf28a" stroke-width=".6"/><rect x="8.200" y="4" width="1.700" height="5.200" fill="#111"/><rect x="8.200" y="10.200" width="1.700" height="1.700" fill="#111"/></svg>
<svg style="left:4px;top:882px" width="18" height="16" viewBox="0 0 18 16"><path d="M9 0.800 L16.500 8 L9 15.200 L1.500 8Z" fill="#f4e22a" stroke="#b8a800" stroke-width="1"/><path d="M9 1.800 L15.500 8 L9 14.200 L2.500 8Z" fill="none" stroke="#fbf28a" stroke-width=".6"/><rect x="8.200" y="4" width="1.700" height="5.200" fill="#111"/><rect x="8.200" y="10.200" width="1.700" height="1.700" fill="#111"/></svg>
<!-- h scrollbar info -->
<div class="a" style="left:4px;top:978px;width:222px;height:17px;background:#f0f0f0"></div>
<div class="a" style="left:26px;top:979px;width:15px;height:15px;box-sizing:border-box;border:1px solid #979797;border-radius:2px;background:linear-gradient(180deg,#f4f4f4 0,#e6e6e6 45%,#d2d2d2 50%,#c4c4c4 100%)"></div>
<div class="a" style="left:9px;top:982px;border:4px solid transparent;border-right:5px solid #3a3a3a;border-left:none"></div>
<div class="a" style="left:214px;top:982px;border:4px solid transparent;border-left:5px solid #3a3a3a;border-right:none"></div>
<!-- tabs strip 2 -->
<div class="a" style="left:0;top:997px;width:229px;height:24px;background:linear-gradient(180deg,#e8eaf0 0,#dcdfe7 50%,#d2d6de 100%)"></div>
<svg style="left:0;top:997px" width="232" height="24" viewBox="0 0 232 24">
<defs><linearGradient id="tbG2" x1="0" y1="0" x2="0" y2="1"><stop offset="0" stop-color="#c4dca8"/><stop offset="1" stop-color="#e2efd0"/></linearGradient></defs>
<path d="M148 0.500 H226 L218 19 Q216.500 21.500 213 21.500 H163 Q159.500 21.500 158 19Z" fill="url(#tbG2)" stroke="#b8c8a8" stroke-width=".6"/>
<path d="M4 0.500 H80 L74 19 Q72.500 21.500 69 21.500 H18 Q14.500 21.500 13 19Z" fill="url(#tbW)" stroke="#b0b8c8" stroke-width=".6"/>
<path d="M72 0.500 H154 L146 19 Q144.500 21.500 141 21.500 H87 Q83.500 21.500 82 19Z" fill="url(#tbY)" stroke="#d8c080" stroke-width=".6"/>
<g><rect x="14.500" y="6.500" width="12" height="10" fill="#fff" stroke="#2a62c0" stroke-width="1"/><path d="M16 10 H22 M16 12.500 H25 M16 14.500 H25" stroke="#7fa0d8" stroke-width=".8"/><path d="M24.500 8.500 V11.500" stroke="#e03030" stroke-width="1.400"/><path d="M15 6 L21 2.500 L27 6 L23 8 L19 7Z" fill="#f4c040" stroke="#a87800" stroke-width=".5"/><path d="M24 2 h4 v4z" fill="#e03030"/></g>
<g><ellipse cx="93.500" cy="9.500" rx="6.500" ry="5.500" fill="#fff" stroke="#111" stroke-width="1"/><path d="M90 14 L89.500 18 L93.500 15Z" fill="#fff" stroke="#111" stroke-width="1"/></g>
<g><path d="M156.500 11.500 L164.500 7 L170.500 9.200 L163 14Z" fill="#fff" stroke="#111" stroke-width="1"/><path d="M156.500 11.500 V13.500 L163 16.300 L170.500 11.300 V9.200" fill="#fff" stroke="#111" stroke-width="1"/></g>
</svg>
<div class="t" style="left:32px;top:1004px;font-size:11.500px;color:#0a1a3a;letter-spacing:.1px">Vlastn...</div>
<div class="t" style="left:103px;top:1004px;font-size:11.500px;color:#0a1a3a;letter-spacing:.1px">Inform...</div>
<div class="t" style="left:174px;top:1004px;font-size:11.500px;color:#0a1a3a;letter-spacing:.1px">Náhled</div>
<!-- ===== VIEWPORT ===== -->
<div class="a" style="left:0;top:113px;width:1886px;height:2px;background:linear-gradient(180deg,#c6c9d1,#b4b7c0)"></div><div class="a" style="left:229px;top:115px;width:5px;height:790px;background:linear-gradient(90deg,#d9dce4,#cdd1d9)"></div><div class="a" style="left:234px;top:115px;width:1651px;height:767px;background:#ffffff"></div><div class="a" style="left:234px;top:115px;width:1650px;height:1px;background:#606169"></div><div class="a" style="left:234px;top:115px;width:1px;height:766px;background:#606169"></div>
<svg style="left:0;top:0" width="1920" height="1080" viewBox="0 0 1920 1080">
<defs>
<linearGradient id="vbg" gradientUnits="userSpaceOnUse" x1="0" y1="116" x2="0" y2="881"><stop offset="0" stop-color="#ffffff"/><stop offset=".42" stop-color="#e7e7e7"/><stop offset=".74" stop-color="#dadada"/><stop offset="1" stop-color="#d0d0d0"/></linearGradient>
<linearGradient id="cyl" gradientUnits="userSpaceOnUse" x1="0" y1="440" x2="0" y2="676"><stop offset="0" stop-color="#9f9f9f"/><stop offset=".22" stop-color="#999999"/><stop offset=".5" stop-color="#777777"/><stop offset=".68" stop-color="#4c4c4c"/><stop offset=".83" stop-color="#222222"/><stop offset="1" stop-color="#202020"/></linearGradient>
<linearGradient id="neck" gradientUnits="userSpaceOnUse" x1="0" y1="462" x2="0" y2="650"><stop offset="0" stop-color="#9f9f9f"/><stop offset=".2" stop-color="#999999"/><stop offset=".5" stop-color="#747474"/><stop offset=".7" stop-color="#484848"/><stop offset=".86" stop-color="#222222"/><stop offset="1" stop-color="#202020"/></linearGradient>
<linearGradient id="win1" gradientUnits="userSpaceOnUse" x1="435" y1="0" x2="513" y2="0"><stop offset="0" stop-color="#a8a8a8"/><stop offset=".12" stop-color="#f4f4f4"/><stop offset=".35" stop-color="#ffffff"/><stop offset=".58" stop-color="#e8e8e8"/><stop offset=".6" stop-color="#b8b8b8"/><stop offset=".78" stop-color="#8a8a8a"/><stop offset=".95" stop-color="#262626"/><stop offset="1" stop-color="#1c1c1c"/></linearGradient>
<linearGradient id="win2" gradientUnits="userSpaceOnUse" x1="655" y1="0" x2="712" y2="0"><stop offset="0" stop-color="#f0f0f0"/><stop offset=".2" stop-color="#ffffff"/><stop offset=".5" stop-color="#d8d8d8"/><stop offset=".8" stop-color="#8a8a8a"/><stop offset="1" stop-color="#444444"/></linearGradient>
<linearGradient id="hole" gradientUnits="userSpaceOnUse" x1="711" y1="0" x2="749" y2="0"><stop offset="0" stop-color="#c4c4c4"/><stop offset=".35" stop-color="#a0a0a0"/><stop offset=".7" stop-color="#3a3a3a"/><stop offset="1" stop-color="#1e1e1e"/></linearGradient>
<linearGradient id="cres" gradientUnits="userSpaceOnUse" x1="0" y1="450" x2="0" y2="670"><stop offset="0" stop-color="#c8c8c8"/><stop offset=".5" stop-color="#d6d6d6"/><stop offset="1" stop-color="#e6e6e6"/></linearGradient>
<linearGradient id="cam" gradientUnits="userSpaceOnUse" x1="0" y1="444" x2="0" y2="592"><stop offset="0" stop-color="#a8a8a8"/><stop offset=".14" stop-color="#8c8c8c"/><stop offset=".16" stop-color="#6e6e6e"/><stop offset=".64" stop-color="#808080"/><stop offset=".66" stop-color="#8a8a8a"/><stop offset=".8" stop-color="#4a4a4a"/><stop offset=".93" stop-color="#222222"/><stop offset="1" stop-color="#202020"/></linearGradient>
<linearGradient id="stripe" gradientUnits="userSpaceOnUse" x1="0" y1="506" x2="0" y2="590"><stop offset="0" stop-color="#a8a8a8"/><stop offset=".45" stop-color="#c8c8c8"/><stop offset="1" stop-color="#ffffff"/></linearGradient>
<clipPath id="vclip"><rect x="235" y="116" width="1649" height="765"/></clipPath>
</defs>
<defs><linearGradient id="hexTop" gradientUnits="userSpaceOnUse" x1="0" y1="468" x2="0" y2="501"><stop offset="0" stop-color="#a4a4a4"/><stop offset="1" stop-color="#8a8a8a"/></linearGradient><linearGradient id="hexFront" gradientUnits="userSpaceOnUse" x1="0" y1="500" x2="0" y2="577"><stop offset="0" stop-color="#7c7c7c"/><stop offset="1" stop-color="#868686"/></linearGradient></defs>
<g clip-path="url(#vclip)">
<rect x="235" y="116" width="1649" height="765" fill="url(#vbg)"/>
<polygon points="1040.2,116.0 1884.0,116.0 1884.0,624.0 588.0,676.5 586.0,672.5" fill="#2b422b"/>
<polygon points="1458.3,116.0 1884.0,116.0 1884.0,370.7 1526.8,385.0" fill="#070a07"/>
<polygon points="235.0,686.5 1884.0,619.6 1884.0,881.0 235.0,881.0" fill="#43392b"/>
<polygon points="301.7,773.3 1884.0,710.2 1884.0,737.4 308.5,800.2" fill="#0a0807"/>
<polygon points="725.0,881.0 1884.0,835.0 1884.0,863.2 1431.0,881.0" fill="#0a0807"/>
<path d="M235.0 505.6L314.3 502.4 L309.5 530.0 L308.3 549.6 L309.0 580.0 L313.0 612.0 L320.5 634.0L317.0 683.0 L302.2 775.2 L322.6 860.4 L309.6 878.9 L308.0 881.0 L235.0 881.0Z" fill="#999999"/>
<polygon points="235.0,773.3 255.2,771.5 265.2,773.3 278.1,801.1 279.3,881.0 235.0,881.0" fill="#9d9d9d" stroke="#3a3a3a" stroke-width="0.6" stroke-linejoin="round"/>
<polygon points="235.0,773.3 255.2,771.5 243.6,797.4 235.0,797.4" fill="#b2b2b2" stroke="#3a3a3a" stroke-width="0.6" stroke-linejoin="round"/>
<polygon points="235.0,797.4 243.6,797.4 243.6,881.0 235.0,881.0" fill="#6e6e6e" stroke="#3a3a3a" stroke-width="0.6" stroke-linejoin="round"/>
<path d="M303 776 L281 845.6 L279.3 881" fill="none" stroke="#3a3a3a" stroke-width="0.6" stroke-linejoin="round" stroke-linecap="round"/>
<path d="M265.2 773.3 L278.1 801.1" fill="none" stroke="#3a3a3a" stroke-width="0.6" stroke-linejoin="round" stroke-linecap="round"/>
<path d="M243.5 506.0C244.2 512.5 246.7 532.2 247.6 545.0 C248.5 557.8 249.4 568.4 249.2 582.6 C249.0 596.8 247.9 613.8 246.5 630.0 C245.1 646.2 242.3 666.0 240.5 680.0 C238.7 694.0 236.5 707.7 235.6 714.0 C234.7 720.3 235.1 717.3 235.0 718.0L235.0 738.0C235.6 734.3 237.1 725.7 238.6 716.0 C240.1 706.3 242.3 694.3 244.2 680.0 C246.1 665.7 248.8 646.2 250.2 630.0 C251.6 613.8 252.7 596.8 252.9 582.6 C253.1 568.4 252.2 557.8 251.2 545.0 C250.2 532.2 247.7 512.5 247.0 506.0" fill="url(#stripe)"/>
<path d="M283.5 506.0C284.0 512.5 285.9 532.2 286.6 545.0 C287.4 557.8 287.9 568.4 288.0 582.6 C288.1 596.8 287.7 614.6 287.0 630.0 C286.3 645.4 285.5 658.5 283.6 675.2 C281.7 691.9 278.7 713.6 275.5 730.0 C272.3 746.4 266.1 766.1 264.2 773.3L268.2 773.3C270.1 766.1 276.2 746.4 279.4 730.0 C282.6 713.6 285.5 691.9 287.4 675.2 C289.3 658.5 290.1 645.4 290.9 630.0 C291.6 614.6 292.0 596.8 291.9 582.6 C291.8 568.4 291.2 557.8 290.4 545.0 C289.6 532.2 287.8 512.5 287.3 506.0" fill="url(#stripe)"/>
<path d="M240.3 506.0C241.0 512.5 243.5 532.2 244.4 545.0 C245.3 557.8 246.2 568.4 246.0 582.6 C245.8 596.8 244.8 613.8 243.3 630.0 C241.9 646.2 239.1 666.0 237.3 680.0 C235.5 694.0 233.3 707.7 232.4 714.0 C231.5 720.3 231.9 717.3 231.8 718.0" fill="none" stroke="#3a3a3a" stroke-width="0.6" stroke-linejoin="round" stroke-linecap="round"/>
<path d="M280.3 506.0C280.8 512.5 282.7 532.2 283.4 545.0 C284.2 557.8 284.7 568.4 284.8 582.6 C284.9 596.8 284.5 614.6 283.8 630.0 C283.1 645.4 282.3 658.5 280.4 675.2 C278.5 691.9 275.5 713.6 272.3 730.0 C269.1 746.4 262.9 766.1 261.0 773.3" fill="none" stroke="#3a3a3a" stroke-width="0.6" stroke-linejoin="round" stroke-linecap="round"/>
<path d="M249.9 506.0C250.6 512.5 253.1 532.2 254.0 545.0 C254.9 557.8 255.8 568.4 255.6 582.6 C255.4 596.8 254.3 613.8 252.9 630.0 C251.5 646.2 248.7 666.0 246.9 680.0 C245.1 694.0 242.9 707.7 242.0 714.0 C241.1 720.3 241.5 717.3 241.4 718.0" fill="none" stroke="#3a3a3a" stroke-width="0.6" stroke-linejoin="round" stroke-linecap="round"/>
<path d="M289.9 506.0C290.4 512.5 292.2 532.2 293.0 545.0 C293.8 557.8 294.3 568.4 294.4 582.6 C294.5 596.8 294.1 614.6 293.4 630.0 C292.7 645.4 291.9 658.5 290.0 675.2 C288.1 691.9 285.1 713.6 281.9 730.0 C278.7 746.4 272.5 766.1 270.6 773.3" fill="none" stroke="#3a3a3a" stroke-width="0.6" stroke-linejoin="round" stroke-linecap="round"/>
<polygon points="235.0,505.6 242.0,505.3 235.0,515.0" fill="#c0c0c0" stroke="#3a3a3a" stroke-width="0.5" stroke-linejoin="round"/>
<path d="M320.5 634 L317 683 L302.2 775.2 L322.6 860.4 L309.6 878.9" fill="none" stroke="#3a3a3a" stroke-width="0.6" stroke-linejoin="round" stroke-linecap="round"/>
<polygon points="235.0,470.6 329.8,466.7 314.3,502.4 235.0,505.6" fill="#000000"/>
<polygon points="235.0,470.6 329.8,466.7 321.5,486.0 235.0,489.5" fill="#121212"/>
<path d="M235.0 251.0C237.9 255.7 247.1 269.4 252.2 278.9 C257.3 288.4 261.3 298.2 265.6 307.8 C269.9 317.4 274.7 328.2 277.8 336.7 C280.9 345.2 283.3 355.2 284.4 358.9L260.0 389.6 L256.7 392.2 L235.0 420.0Z" fill="#979797" stroke="#3a3a3a" stroke-width="0.7" stroke-linejoin="round" stroke-linecap="round"/>
<path d="M235.0 327.8C236.4 331.5 240.5 342.8 243.3 350.0 C246.1 357.2 249.2 364.5 252.0 371.0 C254.8 377.5 258.7 385.9 260.0 388.9L255.6 391.1C254.2 388.2 249.6 380.0 247.0 374.0 C244.4 368.0 242.0 361.2 240.0 355.0 C238.0 348.8 235.8 339.8 235.0 336.7Z" fill="#3c3c3c"/>
<polygon points="277.8,337.0 361.0,333.3 322.2,382.2 374.4,380.7 334.4,428.4 235.0,432.2 235.0,420.0 256.7,392.2 260.0,389.6 284.4,359.0" fill="#a9a9a9" stroke="#3a3a3a" stroke-width="0.7" stroke-linejoin="round"/>
<path d="M361.0 333.3C364.0 335.4 375.2 340.6 378.9 345.6 C382.6 350.6 382.5 358.1 383.3 363.3 C384.1 368.5 384.0 370.9 383.6 376.7 C383.2 382.5 381.5 394.4 381.1 398.0L374.4 380.7 L322.2 382.2Z" fill="#959595" stroke="#3a3a3a" stroke-width="0.7" stroke-linejoin="round" stroke-linecap="round"/>
<polygon points="334.4,428.4 374.4,380.7 381.1,398.0 392.5,452.0 349.0,453.6 338.0,459.0 331.0,466.5" fill="#959595" stroke="#3a3a3a" stroke-width="0.7" stroke-linejoin="round"/>
<polygon points="235.0,432.2 334.4,428.4 331.0,466.7 235.0,470.6" fill="#8f8f8f" stroke="#3a3a3a" stroke-width="0.7" stroke-linejoin="round"/>
<path d="M349.3 453.2L435.0 451.0C433.8 455.0 429.7 462.0 428.0 470.0 C426.3 478.0 425.1 490.8 425.0 500.0 C424.9 509.2 426.2 517.1 427.5 525.0 C428.8 532.9 430.4 539.2 432.5 547.5 C434.6 555.8 437.1 566.2 440.0 575.0 C442.9 583.8 446.5 592.2 450.0 600.0 C453.5 607.8 456.8 614.9 461.0 622.0 C465.2 629.1 470.7 637.2 475.0 642.5 C479.3 647.8 482.8 650.7 487.0 654.0 C491.2 657.3 494.9 660.0 500.0 662.5 C505.1 665.0 514.6 667.8 517.5 668.8L517.5 669.5 L357.0 675.4C355.0 674.3 349.2 672.4 345.0 669.0 C340.8 665.6 336.5 661.8 332.0 655.0 C327.5 648.2 321.7 638.8 318.0 628.0 C314.3 617.2 311.6 603.1 310.0 590.0 C308.4 576.9 308.0 562.1 308.3 549.6 C308.6 537.1 309.7 525.8 312.0 515.0 C314.3 504.2 318.2 493.8 322.0 485.0 C325.8 476.2 330.4 467.3 335.0 462.0 C339.6 456.7 346.9 454.7 349.3 453.2Z" fill="url(#cyl)"/>
<polygon points="435.0,451.0 512.5,447.0 580.0,444.3 580.0,464.0 640.0,462.0 653.8,441.3 780.0,436.3 900.0,431.6 906.0,652.8 860.0,654.6 799.0,657.0 735.0,660.0 592.5,666.3 517.5,669.5 470.0,640.0 440.0,575.0 425.0,500.0" fill="url(#cyl)"/>
<path d="M437.5 470.0L501.0 467.5 L500 480 C499.9 482.8 499.5 491.6 499.5 497.0 C499.5 502.4 499.4 506.2 500.0 512.5 C500.6 518.8 501.8 527.9 503.0 535.0 C504.2 542.1 505.8 547.8 507.5 555.0 C509.2 562.2 510.9 570.5 513.0 578.0 C515.1 585.5 517.3 593.3 520.0 600.0 C522.7 606.7 525.7 612.2 529.0 618.0 C532.3 623.8 538.2 632.2 540.0 635.0 L555 648 C550.8 648.1 538.3 648.9 530.0 648.8 C521.7 648.7 511.3 648.9 505.0 647.5 C498.7 646.1 496.2 643.4 492.0 640.5 C487.8 637.6 484.3 634.9 480.0 630.0 C475.7 625.1 470.2 617.7 466.0 611.0 C461.8 604.3 458.5 597.7 455.0 590.0 C451.5 582.3 447.9 573.8 445.0 565.0 C442.1 556.2 439.3 545.0 437.5 537.5 C435.7 530.0 434.8 526.2 434.0 520.0 C433.2 513.8 432.6 505.8 432.5 500.0 C432.4 494.2 432.7 490.0 433.5 485.0 C434.3 480.0 436.8 472.5 437.5 470.0Z" fill="url(#neck)"/>
<polygon points="517.5,669.8 530.0,667.0 540.0,663.8 555.0,652.5 555.0,648.0 560.0,655.0 575.0,663.8 590.0,666.0 593.0,666.6 593.0,668.0" fill="#dcdcdc"/>
<path d="M435.0 452.0C433.8 455.0 429.7 462.0 428.0 470.0 C426.3 478.0 425.1 490.8 425.0 500.0 C424.9 509.2 426.2 517.1 427.5 525.0 C428.8 532.9 430.4 539.2 432.5 547.5 C434.6 555.8 437.1 566.2 440.0 575.0 C442.9 583.8 446.5 592.2 450.0 600.0 C453.5 607.8 456.8 614.9 461.0 622.0 C465.2 629.1 470.7 637.2 475.0 642.5 C479.3 647.8 482.8 650.7 487.0 654.0 C491.2 657.3 494.9 660.0 500.0 662.5 C505.1 665.0 510.8 668.6 517.5 668.8 C524.2 669.0 533.8 666.5 540.0 663.8 C546.2 661.1 552.5 654.4 555.0 652.5L555.0 648.0C550.8 648.1 538.3 648.9 530.0 648.8 C521.7 648.7 511.3 648.9 505.0 647.5 C498.7 646.1 496.2 643.4 492.0 640.5 C487.8 637.6 484.3 634.9 480.0 630.0 C475.7 625.1 470.2 617.7 466.0 611.0 C461.8 604.3 458.5 597.7 455.0 590.0 C451.5 582.3 447.9 573.8 445.0 565.0 C442.1 556.2 439.3 545.0 437.5 537.5 C435.7 530.0 434.8 526.2 434.0 520.0 C433.2 513.8 432.6 505.8 432.5 500.0 C432.4 494.2 432.7 490.0 433.5 485.0 C434.3 480.0 436.8 472.5 437.5 470.0Z" fill="url(#cres)" stroke="#3a3a3a" stroke-width="0.6" stroke-linejoin="round" stroke-linecap="round"/>
<polygon points="435.0,452.0 482.5,449.6 512.5,447.0 501.0,467.5 437.5,470.0" fill="url(#win1)" stroke="#3a3a3a" stroke-width="0.6" stroke-linejoin="round"/>
<path d="M482.5 449.6 L481.5 468.2" fill="none" stroke="#3a3a3a" stroke-width="0.6" stroke-linejoin="round" stroke-linecap="round"/>
<path d="M512.5 447.0L580.0 444.3C578.5 445.6 573.3 448.1 571.0 452.0 C568.7 455.9 567.2 460.8 566.0 467.5 C564.8 474.2 564.0 485.1 563.8 492.5 C563.6 499.9 564.4 505.8 565.0 512.0 C565.6 518.2 566.2 523.7 567.5 530.0 C568.8 536.3 570.4 543.3 572.5 550.0 C574.6 556.7 577.2 563.3 580.0 570.0 C582.8 576.7 585.7 583.3 589.0 590.0 C592.3 596.7 596.2 603.8 600.0 610.0 C603.8 616.2 607.8 621.6 612.0 627.0 C616.2 632.4 619.5 637.6 625.0 642.5 C630.5 647.4 640.0 653.0 645.0 656.3 C650.0 659.6 653.3 661.5 655.0 662.5L592.5 666.3 L590 666 C587.5 665.6 580.0 665.6 575.0 663.8 C570.0 662.0 564.3 658.0 560.0 655.0 C555.7 652.0 552.3 649.3 549.0 646.0 C545.7 642.7 543.3 639.7 540.0 635.0 C536.7 630.3 532.3 623.8 529.0 618.0 C525.7 612.2 522.7 606.7 520.0 600.0 C517.3 593.3 515.1 585.5 513.0 578.0 C510.9 570.5 509.2 562.2 507.5 555.0 C505.8 547.8 504.2 542.1 503.0 535.0 C501.8 527.9 500.6 518.8 500.0 512.5 C499.4 506.2 499.5 502.4 499.5 497.0 C499.5 491.6 499.2 485.8 500.0 480.0 C500.8 474.2 501.9 467.5 504.0 462.0 C506.1 456.5 511.1 449.5 512.5 447.0Z" fill="url(#cyl)" stroke="#3a3a3a" stroke-width="0.6" stroke-linejoin="round" stroke-linecap="round"/>
<path d="M580.0 444.3C578.5 445.6 573.3 448.1 571.0 452.0 C568.7 455.9 567.2 460.8 566.0 467.5 C564.8 474.2 564.0 485.1 563.8 492.5 C563.6 499.9 564.4 505.8 565.0 512.0 C565.6 518.2 566.2 523.7 567.5 530.0 C568.8 536.3 570.4 543.3 572.5 550.0 C574.6 556.7 577.2 563.3 580.0 570.0 C582.8 576.7 585.7 583.3 589.0 590.0 C592.3 596.7 596.2 603.8 600.0 610.0 C603.8 616.2 607.8 621.6 612.0 627.0 C616.2 632.4 619.5 637.6 625.0 642.5 C630.5 647.4 640.0 653.0 645.0 656.3 C650.0 659.6 653.3 661.5 655.0 662.5L655.0 643.8C652.9 643.4 647.5 643.6 642.5 641.3 C637.5 639.0 629.7 633.8 625.0 630.0 C620.3 626.2 617.8 622.7 614.5 618.5 C611.2 614.3 608.2 610.1 605.0 605.0 C601.8 599.9 598.4 593.8 595.5 588.0 C592.6 582.2 589.9 575.8 587.5 570.0 C585.1 564.2 582.9 558.8 581.0 553.0 C579.1 547.2 577.6 540.8 576.3 535.0 C575.0 529.2 573.8 523.8 573.0 518.0 C572.2 512.2 571.2 507.2 571.3 500.0 C571.4 492.8 573.1 480.0 573.8 475.0 C574.5 470.0 574.5 471.8 575.5 470.0 C576.5 468.2 579.2 465.2 580.0 464.3 C586 462 594 462 595 462.5 C593 452 588 445.5 580 444.3Z" fill="url(#cres)" stroke="#3a3a3a" stroke-width="0.6" stroke-linejoin="round" stroke-linecap="round"/>
<path d="M580.0 464.3L640.0 462.0C639.4 475.4 638.7 485.8 638.8 492.5 C638.9 499.2 639.4 505.8 640.0 512.0 C640.6 518.2 641.4 523.7 642.5 530.0 C643.6 536.3 644.8 543.3 646.5 550.0 C648.2 556.7 650.3 563.7 652.5 570.0 C654.7 576.3 657.0 582.2 659.5 588.0 C662.0 593.8 664.8 599.8 667.5 605.0 C670.2 610.2 673.1 614.9 676.0 619.5 C678.9 624.1 682.3 629.0 685.0 632.5 C687.7 636.0 689.5 638.0 692.0 640.5 C694.5 643.0 698.7 646.3 700.0 647.5L690.0 642.5 L655.0 643.8C652.9 643.4 647.5 643.6 642.5 641.3 C637.5 639.0 629.7 633.8 625.0 630.0 C620.3 626.2 617.8 622.7 614.5 618.5 C611.2 614.3 608.2 610.1 605.0 605.0 C601.8 599.9 598.4 593.8 595.5 588.0 C592.6 582.2 589.9 575.8 587.5 570.0 C585.1 564.2 582.9 558.8 581.0 553.0 C579.1 547.2 577.6 540.8 576.3 535.0 C575.0 529.2 573.8 523.8 573.0 518.0 C572.2 512.2 571.2 507.2 571.3 500.0 C571.4 492.8 573.1 480.0 573.8 475.0 C574.5 470.0 574.5 471.8 575.5 470.0 C576.5 468.2 579.2 465.2 580.0 464.3Z" fill="url(#neck)"/>
<path d="M580 464.3 L595 462.6 L640 462" fill="none" stroke="#3a3a3a" stroke-width="0.5" stroke-linejoin="round" stroke-linecap="round"/>
<polygon points="655.0,643.8 690.0,642.5 700.0,647.5 710.0,656.3 655.0,662.5" fill="url(#win2)" stroke="#3a3a3a" stroke-width="0.5" stroke-linejoin="round"/>
<path d="M653.8 441.3L780.0 436.3 L900.0 431.6 L906.0 652.8 L860.0 654.6 L799.0 657.0 L735.0 660.0C732.5 659.8 724.2 659.8 720.0 658.8 C715.8 657.8 713.3 655.9 710.0 654.0 C706.7 652.1 703.0 649.8 700.0 647.5 C697.0 645.2 694.5 643.0 692.0 640.5 C689.5 638.0 687.7 636.0 685.0 632.5 C682.3 629.0 678.9 624.1 676.0 619.5 C673.1 614.9 670.2 610.2 667.5 605.0 C664.8 599.8 662.0 593.8 659.5 588.0 C657.0 582.2 654.7 576.3 652.5 570.0 C650.3 563.7 648.2 556.7 646.5 550.0 C644.8 543.3 643.6 536.3 642.5 530.0 C641.4 523.7 640.6 518.2 640.0 512.0 C639.4 505.8 638.9 499.2 638.8 492.5 C638.7 485.8 638.9 478.2 639.5 472.0 C640.1 465.8 641.5 459.0 642.5 455.0 C643.5 451.0 643.6 450.3 645.5 448.0 C647.4 445.7 652.4 442.4 653.8 441.3Z" fill="url(#cyl)" stroke="#3a3a3a" stroke-width="0.6" stroke-linejoin="round" stroke-linecap="round"/>
<path d="M716.3 487.5L746.3 476.3C745.6 478.2 743.0 484.1 742.0 488.0 C741.0 491.9 740.6 495.2 740.0 500.0 C739.4 504.8 738.8 511.2 738.5 517.0 C738.2 522.8 738.0 529.0 738.0 535.0 C738.0 541.0 738.2 547.2 738.5 553.0 C738.8 558.8 739.2 564.2 740.0 570.0 C740.8 575.8 741.8 582.2 743.0 588.0 C744.2 593.8 746.0 600.0 747.5 605.0 C749.0 610.0 750.3 613.8 752.0 618.0 C753.7 622.2 755.8 626.4 757.5 630.0 C759.2 633.6 761.7 637.9 762.5 639.5C760.4 639.4 753.4 639.7 750.0 638.8 C746.6 637.9 744.5 635.9 742.0 634.0 C739.5 632.1 737.3 630.3 735.0 627.5 C732.7 624.7 730.1 620.8 728.0 617.0 C725.9 613.2 724.2 609.5 722.5 605.0 C720.8 600.5 719.0 595.0 717.5 590.0 C716.0 585.0 714.8 580.3 713.8 575.0 C712.8 569.7 711.8 563.8 711.2 558.0 C710.6 552.2 710.1 545.5 710.0 540.0 C709.9 534.5 710.2 530.0 710.5 525.0 C710.8 520.0 711.5 514.5 712.0 510.0 C712.5 505.5 712.8 501.8 713.5 498.0 C714.2 494.2 715.8 489.2 716.3 487.5Z" fill="url(#neck)" stroke="#3a3a3a" stroke-width="0.5" stroke-linejoin="round" stroke-linecap="round"/>
<path d="M711.3 475.0C710.6 477.0 708.0 482.8 707.0 487.0 C706.0 491.2 705.7 495.0 705.0 500.0 C704.3 505.0 703.4 511.2 703.0 517.0 C702.6 522.8 702.4 529.0 702.5 535.0 C702.6 541.0 703.2 547.2 703.8 553.0 C704.4 558.8 705.3 564.2 706.3 570.0 C707.3 575.8 708.5 582.2 710.0 588.0 C711.5 593.8 713.0 599.3 715.0 605.0 C717.0 610.7 719.5 616.6 722.0 622.0 C724.5 627.4 727.5 633.3 730.0 637.5 C732.5 641.7 734.5 644.1 737.0 647.0 C739.5 649.9 742.7 653.2 745.0 655.0 C747.3 656.8 748.9 657.4 751.0 658.0 C753.1 658.6 754.8 659.5 757.5 658.8 C760.2 658.1 765.0 655.3 767.5 653.8 C770.0 652.3 771.7 650.6 772.5 650.0L762.5 639.5C760.4 639.4 753.4 639.7 750.0 638.8 C746.6 637.9 744.5 635.9 742.0 634.0 C739.5 632.1 737.3 630.3 735.0 627.5 C732.7 624.7 730.1 620.8 728.0 617.0 C725.9 613.2 724.2 609.5 722.5 605.0 C720.8 600.5 719.0 595.0 717.5 590.0 C716.0 585.0 714.8 580.3 713.8 575.0 C712.8 569.7 711.8 563.8 711.2 558.0 C710.6 552.2 710.1 545.5 710.0 540.0 C709.9 534.5 710.2 530.0 710.5 525.0 C710.8 520.0 711.5 514.5 712.0 510.0 C712.5 505.5 712.8 501.8 713.5 498.0 C714.2 494.2 715.8 489.2 716.3 487.5Z" fill="url(#cres)" stroke="#3a3a3a" stroke-width="0.6" stroke-linejoin="round" stroke-linecap="round"/>
<path d="M711.3 475.0C711.9 474.0 713.5 470.7 715.0 469.0 C716.5 467.3 718.2 466.2 720.0 465.0 C721.8 463.8 723.9 462.8 726.0 462.0 C728.1 461.2 730.4 460.7 732.5 460.5 C734.6 460.3 736.6 460.5 738.5 460.8 C740.4 461.1 742.4 461.8 743.8 462.5 C745.2 463.2 746.2 463.9 747.0 465.0 C747.8 466.1 748.2 467.6 748.3 468.8 C748.4 470.1 748.1 471.2 747.8 472.5 C747.5 473.8 746.5 475.7 746.3 476.3C745.1 476.4 741.3 476.4 739.0 476.6 C736.7 476.8 734.7 476.9 732.5 477.5 C730.3 478.1 728.1 478.9 726.0 480.0 C723.9 481.1 721.6 482.6 720.0 483.8 C718.4 485.1 716.9 486.9 716.3 487.5Z" fill="url(#hole)" stroke="#3a3a3a" stroke-width="0.6" stroke-linejoin="round" stroke-linecap="round"/>
<path d="M737.5 461 L741 477" fill="none" stroke="#1a1a1a" stroke-width="0.6" stroke-linejoin="round" stroke-linecap="round"/>
<path d="M711.3 475 L716.3 487.5" fill="none" stroke="#3a3a3a" stroke-width="0.5" stroke-linejoin="round" stroke-linecap="round"/>
<path d="M762.5 639.5 C766 645 769 648 772.5 650" fill="none" stroke="#3a3a3a" stroke-width="0.5" stroke-linejoin="round" stroke-linecap="round"/>
<ellipse cx="901" cy="542" rx="45.8" ry="110.8" transform="rotate(1.5 901 542)" fill="#b9b9b9" stroke="#3a3a3a" stroke-width=".6"/>
<polygon points="948.4,572.4 976.1,610.5 993.0,590.6 977.0,585.0 960.0,560.0" fill="#b9b9b9"/>
<polygon points="875.0,501.1 902.2,469.5 955.0,467.9 955.0,499.6" fill="#8e8e8e" stroke="#3a3a3a" stroke-width="0.6" stroke-linejoin="round"/>
<path d="M875 501.1 L902.2 469.5 L955 467.9" fill="none" stroke="#3a3a3a" stroke-width="0.6" stroke-linejoin="round" stroke-linecap="round"/>
<polygon points="875.0,501.1 902.2,469.5 955.0,467.9 948.0,499.8" fill="url(#hexTop)"/>
<path d="M875 501.1 L902.2 469.5 L955 467.9" fill="none" stroke="#3a3a3a" stroke-width="0.6" stroke-linejoin="round" stroke-linecap="round"/>
<polygon points="875.0,501.1 947.6,499.8 948.4,572.4 875.8,576.3" fill="url(#hexFront)" stroke="#3a3a3a" stroke-width="0.6" stroke-linejoin="round"/>
<polygon points="875.8,576.3 948.4,572.4 976.1,610.5 904.3,615.2" fill="#222222"/>
<path d="M955.4 446.7L1028.0 444.1C1027.2 445.4 1024.1 448.6 1023.0 452.0 C1021.9 455.4 1021.6 459.3 1021.5 464.8 C1021.4 470.3 1022.0 477.5 1022.3 485.0 C1022.6 492.5 1023.0 500.8 1023.5 510.0 C1024.0 519.2 1024.7 532.0 1025.4 540.0 C1026.2 548.0 1026.8 552.7 1028.0 558.0 C1029.2 563.3 1030.7 568.0 1032.5 572.0 C1034.3 576.0 1036.9 579.6 1039.0 582.0 C1041.1 584.4 1043.2 585.6 1045.0 586.5 C1046.8 587.4 1049.2 587.1 1050.0 587.2L977.4 591.3C976.7 590.9 974.6 590.3 973.0 589.0 C971.4 587.7 969.8 586.0 968.0 583.5 C966.2 581.0 964.2 577.9 962.5 574.0 C960.8 570.1 958.9 565.2 957.5 560.0 C956.1 554.8 955.0 549.3 954.0 542.6 C953.0 535.9 952.2 527.1 951.5 520.0 C950.8 512.9 950.0 506.7 949.5 500.0 C949.0 493.3 948.5 486.3 948.3 480.0 C948.0 473.7 947.7 466.7 948.0 462.0 C948.3 457.3 948.8 454.6 950.0 452.0 C951.2 449.4 954.5 447.6 955.4 446.7Z" fill="url(#cam)"/>
<path d="M948.8 468.7 L1021.5 466.1 M954.1 542.6 L1025.4 540" fill="none" stroke="#444" stroke-width="0.6" stroke-linejoin="round" stroke-linecap="round"/>
<path d="M1028.0 444.1C1028.8 444.4 1031.3 444.2 1033.0 446.0 C1034.7 447.8 1036.0 450.8 1038.0 455.0 C1040.0 459.2 1042.7 466.0 1045.0 471.0 C1047.3 476.0 1049.6 480.5 1052.0 485.0 C1054.4 489.5 1057.2 493.7 1059.5 498.0 C1061.8 502.3 1064.3 506.6 1066.0 511.0 C1067.7 515.4 1068.7 519.6 1069.4 524.4 C1070.1 529.2 1070.2 534.9 1070.2 540.0 C1070.2 545.1 1070.1 550.0 1069.5 555.0 C1068.9 560.0 1068.1 565.7 1066.5 570.0 C1064.9 574.3 1062.8 578.1 1060.0 581.0 C1057.2 583.9 1051.7 586.2 1050.0 587.2C1049.2 587.1 1046.8 587.4 1045.0 586.5 C1043.2 585.6 1041.1 584.4 1039.0 582.0 C1036.9 579.6 1034.3 576.0 1032.5 572.0 C1030.7 568.0 1029.2 563.3 1028.0 558.0 C1026.8 552.7 1026.2 548.0 1025.4 540.0 C1024.7 532.0 1024.0 519.2 1023.5 510.0 C1023.0 500.8 1022.6 492.5 1022.3 485.0 C1022.0 477.5 1021.4 470.3 1021.5 464.8 C1021.6 459.3 1021.9 455.4 1023.0 452.0 C1024.1 448.6 1027.2 445.4 1028.0 444.1Z" fill="#bdbdbd"/>
<polygon points="1045.0,540.8 1047.6,536.4 1050.2,536.8 1053.6,538.3 1049.0,540.8" fill="#000"/>
<polygon points="1044.0,520.4 1045.9,536.4 1050.5,534.0" fill="#1010e8"/>
<path d="M1050.3 532.8 L1055.6 526.9" stroke="#22d022" stroke-width="1.4"/>
<polygon points="1049.3,533.6 1056.0,534.0 1064.2,535.2 1056.0,537.4 1049.8,538.2" fill="#ee1010"/>
<polygon points="253.3,851.0 260.5,845.0 266.0,844.5 272.0,843.0 278.0,843.2 280.5,845.0 277.0,851.0 268.0,854.5 255.5,854.8" fill="#ffffff"/>
<polygon points="261.0,825.4 262.6,848.8 270.2,846.0" fill="#1010f0"/>
<polygon points="268.6,843.2 275.2,836.6 276.6,839.4 271.6,845.2" fill="#18d818"/>
<polygon points="268.4,845.3 282.0,845.8 291.3,847.1 283.0,849.6 269.0,850.6" fill="#f01010"/>
<ellipse cx="1048.6" cy="536.3" rx="48.6" ry="111.2" transform="rotate(-2 1048.6 536.3)" fill="none" stroke="#22ba22" stroke-width=".8"/>
<path d="M349.3 453.2C346.9 454.7 339.6 456.7 335.0 462.0 C330.4 467.3 325.8 476.2 322.0 485.0 C318.2 493.8 314.3 504.2 312.0 515.0 C309.7 525.8 308.6 537.1 308.3 549.6 C308.0 562.1 308.4 576.9 310.0 590.0 C311.6 603.1 314.3 617.2 318.0 628.0 C321.7 638.8 327.5 648.2 332.0 655.0 C336.5 661.8 340.8 665.6 345.0 669.0 C349.2 672.4 355.0 674.3 357.0 675.4" fill="none" stroke="#20b020" stroke-width="0.9" stroke-linejoin="round" stroke-linecap="round"/>
<path d="M349.3 453.2 L360 452.6" fill="none" stroke="#20b020" stroke-width="0.8" stroke-linejoin="round" stroke-linecap="round"/>
</g>
</svg>
<!-- ===== VIEWPORT BOTTOM BAR ===== -->
<div class="a" style="left:234px;top:881px;width:1650px;height:21px;background:#f0f0f0"></div>
<div class="a" style="left:234px;top:881px;width:101px;height:20px;background:#8fabd0"></div>
<div class="a" style="left:234px;top:881px;width:1px;height:20px;background:#6f7f98"></div>
<div class="t" style="left:236px;top:883px;font-size:11px;color:#000;letter-spacing:-.22px">Dynamický 2.02</div>
<svg style="left:1843px;top:884px" width="42" height="11" viewBox="0 0 42 11"><rect x="1.500" y="1.500" width="9" height="7.500" fill="#fff" stroke="#111" stroke-width="1"/><path d="M1.500 5.200 H10.500" stroke="#111" stroke-width="1.200"/><rect x="14.500" y="1.500" width="9" height="7.500" fill="#fff" stroke="#111" stroke-width="1"/><path d="M19 1.500 V9" stroke="#111" stroke-width="1.200"/><rect x="29" y="1" width="11" height="9" fill="#d8d8d8" stroke="#b0b0b0" stroke-width=".6"/><path d="M31 2.500 L38 8.500 M38 2.500 L31 8.500" stroke="#8a8a8a" stroke-width="1.100"/></svg>
<div class="a" style="left:234px;top:902px;width:1650px;height:1px;background:#fafafa"></div>
<div class="a" style="left:234px;top:903px;width:1650px;height:4px;background:#cfd2dc"></div>
<!-- ===== SIMULACE PANEL ===== -->
<div class="a" style="left:234px;top:907px;width:1650px;height:1px;background:#eef2f8"></div><div class="a" style="left:234px;top:908px;width:1650px;height:20px;background:linear-gradient(180deg,#b7c8de 0,#c6d5e8 35%,#dce7f4 75%,#e9f0fa 100%)"></div>
<div class="t" style="left:238px;top:912px;font-size:11px;color:#5a6a80;letter-spacing:.1px">Simulace</div>
<svg style="left:1852px;top:910px" width="32" height="14" viewBox="0 0 32 14"><path d="M4.500 2 H9.500 M5.500 2 V7.500 M8.500 2 V7.500 M3.500 7.500 H10.500 M7 7.500 V12" stroke="#1a2a4a" stroke-width="1.200" fill="none"/><path d="M20.500 3 L27.500 11 M27.500 3 L20.500 11" stroke="#1a2a4a" stroke-width="1.500"/></svg>
<div class="a" style="left:234px;top:928px;width:1650px;height:70px;background:#f0f0f0"></div>
<div class="a" style="left:234px;top:928px;width:2px;height:69px;background:#e4e8f0"></div>
<div class="a" style="left:1883px;top:907px;width:1px;height:90px;background:#b4c6e4"></div>
<div class="a" style="left:234px;top:996.500px;width:1650px;height:1px;background:#6a6f7c"></div>
<!-- progress slider -->
<div class="a" style="left:252px;top:936px;width:1482px;height:11px;background:#e7e9e8;border-top:1px solid #b4b4b4;box-sizing:border-box"></div>
<svg style="left:245px;top:931px" width="12" height="20" viewBox="0 0 12 20"><path d="M1.500 5.500 L6 1.200 L10.500 5.500 V17.500 Q10.500 18.500 9.500 18.500 H2.500 Q1.500 18.500 1.500 17.500Z" fill="#f4f4f4" stroke="#c2c2c2" stroke-width="1"/></svg>
<!-- button -->
<div class="a" style="left:246px;top:957px;width:117px;height:21px;box-sizing:border-box;border:1px solid #707070;border-radius:3px;background:linear-gradient(180deg,#f3f3f3 0,#ececec 48%,#dedede 52%,#d0d0d0 100%);box-shadow:inset 0 0 0 1px #fbfbfb"></div>
<svg style="left:251px;top:961px" width="12" height="12" viewBox="0 0 12 12"><circle cx="6" cy="6" r="5" fill="#fff" stroke="#111" stroke-width="1.100"/><path d="M6 1.500 V6.300 H8.200" stroke="#111" stroke-width="1.100" fill="none"/></svg>
<div class="t" style="left:264px;top:962px;font-size:11px;color:#000;letter-spacing:-.2px">Konstantní rychlost</div>
<!-- speed slider -->
<div class="a" style="left:387px;top:968px;width:1299px;height:2px;background:#b8b8b8;border-bottom:1px solid #fafafa"></div>
<div class="a" style="left:475px;top:965px;width:4px;height:9px;box-sizing:border-box;border:1px solid #707070;border-radius:1px;background:#f0f0f0"></div>
<!-- spinner + text -->
<div class="a" style="left:1693px;top:957px;width:15px;height:10px;box-sizing:border-box;border:1px solid #c0c4cc;background:#f6f6f6"></div>
<div class="a" style="left:1693px;top:968px;width:15px;height:10px;box-sizing:border-box;border:1px solid #c0c4cc;background:#f6f6f6"></div>
<div class="a" style="left:1697px;top:960px;border:3.5px solid transparent;border-bottom:4px solid #5a74a8;border-top:none"></div>
<div class="a" style="left:1697px;top:971px;border:3.5px solid transparent;border-top:4px solid #5a74a8;border-bottom:none"></div>
<div class="a" style="left:1710px;top:957px;width:24px;height:21px;box-sizing:border-box;border:1px solid #e2e4e8;background:#f2f2f2"></div>
<div class="t" style="left:1713px;top:960px;font-size:12px;color:#000">1</div>
<!-- playback buttons -->
<style>.pb{position:absolute;top:932px;height:20px;box-sizing:border-box;border:1px solid #c9c9c9;border-radius:3px;background:linear-gradient(180deg,#f6f6f6 0,#efefef 50%,#e6e6e6 100%)}.pb.on{border-color:#5a5a5a;background:linear-gradient(180deg,#f4f4f4 0,#ebebeb 48%,#dcdcdc 52%,#cdcdcd 100%)}</style>
<div class="pb" style="left:1743px;width:19px"></div><div class="pb" style="left:1767px;width:22px"></div><div class="pb on" style="left:1791px;width:19px"></div><div class="pb on" style="left:1812px;width:19px"></div><div class="pb" style="left:1834px;width:22px"></div><div class="pb" style="left:1863px;width:19px"></div>
<svg style="left:1743px;top:932px" width="140" height="20" viewBox="0 0 140 20"><rect x="7" y="7" width="5.500" height="5.500" fill="#9a9a9a"/><path d="M30 5.500 V14.500" stroke="#8a8a8a" stroke-width="1.600"/><path d="M36 5.500 V14.500 L31.500 10Z M41.500 5.500 V14.500 L37 10Z" fill="#8a8a8a"/><path d="M61 5 V15 L54.500 10Z" fill="#10108a"/><path d="M76 5 V15 L82.500 10Z" fill="#10108a"/><path d="M96 5.500 V14.500 L100.500 10Z M101.500 5.500 V14.500 L106 10Z" fill="#8a8a8a"/><path d="M107.500 5.500 V14.500" stroke="#8a8a8a" stroke-width="1.600"/><circle cx="128" cy="8.500" r="3.800" fill="#fafafa" stroke="#9a9a9a" stroke-width="1.100"/><path d="M130.800 11.300 L134.500 15" stroke="#9a9a9a" stroke-width="1.800"/></svg>
<!-- tabs strip 3 -->
<div class="a" style="left:229px;top:997px;width:1656px;height:24px;background:linear-gradient(180deg,#e8eaf0 0,#dcdfe7 50%,#d2d6de 100%)"></div>
<svg style="left:229px;top:997px" width="200" height="24" viewBox="0 0 200 24">
<path d="M5 0 H90 L82 19 Q80.500 21.500 77 21.500 H22 Q18.500 21.500 17 19Z" fill="url(#tbW)" stroke="#b0b8c8" stroke-width=".6"/>
<path d="M92 0 H178 L168 19 Q166.500 21.500 163 21.500 H96 Q92.500 21.500 91 19 L86 10Z" fill="url(#tbY)" stroke="#d8c080" stroke-width=".6"/>
<path d="M22 5.500 V16.500 L28.500 11Z" fill="#10109a"/>
<g transform="translate(-2.500 0)"><path d="M93.500 11.500 L102 6.500 L108.500 9 L100.500 14Z" fill="#fff" stroke="#111" stroke-width="1"/><path d="M93.500 11.500 V13.500 L100.500 16.500 L108.500 11.200 V9" fill="#fff" stroke="#111" stroke-width="1"/></g>
</svg>
<div class="t" style="left:265px;top:1004px;font-size:11.500px;color:#0a1a3a;letter-spacing:-.3px">Simulace</div>
<div class="t" style="left:339px;top:1004px;font-size:11.500px;color:#0a1a3a;letter-spacing:-.05px">Souřadnice</div>
<!-- ===== STATUS BAR ===== -->
<div class="a" style="left:0;top:1021px;width:1920px;height:1px;background:#f4f5f8"></div>
<div class="a" style="left:0;top:1022px;width:1920px;height:19px;background:linear-gradient(180deg,#e2e4ea 0,#d4d7de 35%,#bfc2cb 60%,#adb0b9 85%,#b6b9c2 100%)"></div>
<div class="t" style="left:4px;top:1027px;font-size:11px;color:#3a3a46;letter-spacing:0">Připraven</div>
<style>.sc{position:absolute;top:1027px;font-size:11px;color:#9a9eab;white-space:pre;line-height:1}.ss{position:absolute;top:1023px;width:1px;height:17px;background:#9a9eab;box-shadow:1px 0 0 #e6e8ee}</style>
<div class="ss" style="left:1611px"></div><div class="ss" style="left:1662px"></div><div class="ss" style="left:1739px"></div><div class="ss" style="left:1784px"></div><div class="ss" style="left:1829px"></div><div class="ss" style="left:1877px"></div><div class="ss" style="left:1894px"></div>
<div class="sc" style="left:1615px">SNÍMÁNÍ</div><div class="sc" style="left:1667px;letter-spacing:-.27px">OZNAČOVÁNÍ</div><div class="sc" style="left:1743px;letter-spacing:-.6px">MŘÍŽKA</div><div class="sc" style="left:1788px;letter-spacing:.3px">Vkládat</div><div class="sc" style="left:1833px">Poloměr</div><div class="sc" style="left:1881px;color:#2a2a36;letter-spacing:-1px">XY</div><div class="sc" style="left:1898px;color:#2a2a36">mm</div>
<!-- ===== RIGHT TOOLBAR ===== -->
<div class="a" style="left:1887px;top:182px;width:33px;height:412px;border-radius:4px 0 0 0;background:linear-gradient(90deg,#eceef3 0,#e4e7ed 40%,#d9dce4 100%)"></div>
<div class="a" style="left:1887px;top:594px;width:33px;height:10px;border-radius:0 0 0 5px;background:linear-gradient(90deg,#c4c8d1,#a9adb8)"></div>
<div class="a" style="left:1887px;top:605px;width:33px;height:304px;border-radius:4px 0 0 0;background:linear-gradient(90deg,#eceef3 0,#e4e7ed 40%,#d9dce4 100%)"></div>
<div class="a" style="left:1887px;top:909px;width:33px;height:12px;border-radius:0 0 0 5px;background:linear-gradient(90deg,#c4c8d1,#a9adb8)"></div>

<svg style="left:1887px;top:594px" width="33" height="10" viewBox="0 0 33 10"><rect x="20.500" y="2" width="1.500" height="6" fill="#2e2e36"/><path d="M23.500 1.500 L27.500 5 L23.500 8.500Z" fill="#2e2e36"/></svg>
<svg style="left:1887px;top:910px" width="33" height="10" viewBox="0 0 33 10"><rect x="20.500" y="2" width="1.500" height="6" fill="#2e2e36"/><path d="M23.500 1.500 L27.500 5 L23.500 8.500Z" fill="#2e2e36"/></svg>
<div class="a" style="left:1893px;top:187px;width:23px;height:2px;background:repeating-linear-gradient(90deg,#f7f8fa 0 2px,transparent 2px 4px)"></div>
<div class="a" style="left:1892px;top:186px;width:23px;height:2px;background:repeating-linear-gradient(90deg,#8d92a0 0 2px,transparent 2px 4px)"></div>
<div class="a" style="left:1893px;top:609px;width:23px;height:2px;background:repeating-linear-gradient(90deg,#f7f8fa 0 2px,transparent 2px 4px)"></div>
<div class="a" style="left:1892px;top:608px;width:23px;height:2px;background:repeating-linear-gradient(90deg,#8d92a0 0 2px,transparent 2px 4px)"></div>
<div class="a" style="left:1894px;top:286px;width:18px;height:1px;background:#a9aebb;box-shadow:0 1px 0 #f2f3f6"></div>
<div class="a" style="left:1894px;top:896px;width:18px;height:1px;background:#a9aebb;box-shadow:0 1px 0 #f2f3f6"></div>
<style>.ri{position:absolute;left:1891px;width:24px;height:24px}</style>
<!-- 1 face mill -->
<svg class="ri" style="top:194px" viewBox="0 0 24 24"><path d="M1 9.500 L11 3 L23 8.500 L13 15.500Z" fill="#fff" stroke="#1f3fa8" stroke-width=".9"/><path d="M1 9.500 L13 15.500 V21.500 L1 15Z" fill="#7fa8f0" stroke="#1f3fa8" stroke-width=".9"/><path d="M13 15.500 L23 8.500 V14.500 L13 21.500Z" fill="#3f6fd8" stroke="#1f3fa8" stroke-width=".9"/><path d="M3.500 8.500 L15 14 M6 7 L17.500 12.300 M8.500 5.500 L20 10.600 M11 4 L22 9" stroke="#d02838" stroke-width="1.200"/></svg>
<!-- 2 cube on slab with red loops -->
<svg class="ri" style="top:225px" viewBox="0 0 24 24"><path d="M1 14.500 L11 10 L23 14 L13 19Z" fill="#cfe0fb" stroke="#1f3fa8" stroke-width=".8"/><path d="M1 14.500 L13 19 V23.500 L1 18.500Z" fill="#7fa8f0" stroke="#1f3fa8" stroke-width=".8"/><path d="M13 19 L23 14 V18.500 L13 23.500Z" fill="#3f6fd8" stroke="#1f3fa8" stroke-width=".8"/><path d="M7.500 6.500 L12 4.500 L16.500 6.500 V13 L12 15.500 L7.500 13Z" fill="#9fc0f5" stroke="#1f3fa8" stroke-width=".9"/><path d="M7.500 6.500 L12 8.500 L16.500 6.500 M12 8.500 V15.500" fill="none" stroke="#1f3fa8" stroke-width=".8"/><path d="M1.500 6.500 L12 1.500 L22.500 6.500 L12 11.500Z M1.500 9.500 L12 4.500 L22.500 9.500 L12 14.500Z" fill="none" stroke="#d02838" stroke-width="1"/></svg>
<!-- 3 drill + gray block -->
<svg class="ri" style="top:255px" viewBox="0 0 24 24"><path d="M1.500 14 L9 10 L23 15 L17 22.500 L2.500 18Z" fill="#c9ced8" stroke="#4a5068" stroke-width=".5"/><path d="M1.500 14 L2.500 18 L17 22.500 L16.500 18.500Z" fill="#9aa0b0"/><path d="M16.500 18.500 L23 15 L17 22.500Z" fill="#2a3048"/><ellipse cx="11" cy="15.500" rx="2" ry="1.300" fill="#4a5068"/><ellipse cx="16" cy="17" rx="2" ry="1.300" fill="#4a5068"/><path d="M2.500 1 H10 V11 L6.500 14.500 L2.500 11Z" fill="url(#gGold)" stroke="#5a3500" stroke-width=".4"/><path d="M2.500 4.500 L10 2 M2.500 9 L10 6 M4 12 L10 9.800" stroke="#3a2200" stroke-width="1.200"/></svg>
<!-- 4 red cube on blue slab -->
<svg class="ri" style="top:294px" viewBox="0 0 24 24"><path d="M1 15 L11 10.500 L23 14.500 L13 19.500Z" fill="#e6eefc" stroke="#1f3fa8" stroke-width=".8"/><path d="M1 15 L13 19.500 V23.500 L1 19Z" fill="#7fa8f0" stroke="#1f3fa8" stroke-width=".8"/><path d="M13 19.500 L23 14.500 V18.500 L13 23.500Z" fill="#3f6fd8" stroke="#1f3fa8" stroke-width=".8"/><path d="M7 4.500 L12 2 L17 4.500 V13.500 L12 16 L7 13.500Z" fill="#b8d0f8" stroke="#1f3fa8" stroke-width=".9"/><path d="M7 4.500 L12 7 L17 4.500 M12 7 V16 M7 8 L12 10.500 L17 8 M7 11 L12 13.500 L17 11" fill="none" stroke="#d02838" stroke-width=".9"/></svg>
<!-- 5 pocket -->
<svg class="ri" style="top:322px" viewBox="0 0 24 24"><path d="M1 9.500 L11 3 L23 8.500 L13 15.500Z" fill="#fff" stroke="#1f3fa8" stroke-width=".9"/><path d="M1 9.500 L13 15.500 V21.500 L1 15Z" fill="#7fa8f0" stroke="#1f3fa8" stroke-width=".9"/><path d="M13 15.500 L23 8.500 V14.500 L13 21.500Z" fill="#3f6fd8" stroke="#1f3fa8" stroke-width=".9"/><path d="M3.500 9.300 L11.200 4.500 L20.500 8.700 L12.800 13.800Z M7 9.200 L11.500 6.400 L17 8.800 L12.500 11.800Z" fill="none" stroke="#d02838" stroke-width="1.100"/></svg>
<!-- 6 drill + curved block -->
<svg class="ri" style="top:352px" viewBox="0 0 24 24"><path d="M1.500 13 L11 8 C15 6 20 7 23 10 V16 L11 23.500 L2.500 18Z" fill="#b8c2d8" stroke="#4a5068" stroke-width=".5"/><path d="M1.500 13 L11 19 L23 10 C20 7 15 6 11 8Z" fill="#dfe4f0"/><path d="M11 19 L23 12 V16 L11 23.500Z" fill="#5a6488"/><path d="M1.500 13 L11 19 V23.500 L2.500 18Z" fill="#f2f4fa"/><path d="M4.500 0.500 H12.500 L11 14 L8 16.500 L5.500 14Z" fill="url(#gGold)" stroke="#5a3500" stroke-width=".4"/><path d="M6 3 L10 9 M8.500 1 L11.800 6 M5.500 8 L9 14.500" stroke="#3a2200" stroke-width="1.200"/></svg>
<!-- 7 drill + red arrows -->
<svg class="ri" style="top:381px" viewBox="0 0 24 24"><path d="M1 2 H10 V18 L5.500 22 L1 18Z" fill="url(#gGold)" stroke="#5a3500" stroke-width=".4"/><path d="M1 6 L10 2.500 M1 11.500 L10 8 M1 17 L10 13.500 M3 20.300 L10 17.300" stroke="#3a2200" stroke-width="1.300"/><path d="M17.500 1 L23 7 H20 V9 L23 9 L17.500 3.500 M17.500 1 L12 7 H15 V17 H12 L17.500 23 L23 17 H20 V7" fill="#f04050" stroke="#b01020" stroke-width=".6"/><path d="M12.500 11 L17.500 5.500 L22.500 11 M12.500 14 L17.500 19.500 L22.500 14" fill="none" stroke="#b01020" stroke-width=".8"/></svg>
<!-- 8 helix -->
<svg class="ri" style="top:411px" viewBox="0 0 24 24" fill="none" stroke="#c8282c" stroke-width="1"><ellipse cx="12" cy="6" rx="10.500" ry="3.800"/><ellipse cx="12" cy="10.500" rx="11" ry="4"/><ellipse cx="12" cy="15" rx="11" ry="4"/><ellipse cx="12" cy="19" rx="10.500" ry="3.800"/></svg>
<!-- 9 lace -->
<svg class="ri" style="top:439px" viewBox="0 0 24 24"><path d="M1 3.500 L18 1.500 L23.500 17 L5.500 22Z" fill="#f4f7fd" stroke="#2a3a88" stroke-width=".9"/><path d="M4 6 L17 4.500 M17 4.500 L18 7.500 L5.500 9.500 L6.500 12.500 L19.500 10.500 L20.500 13.500 L7.500 16 L8.500 19 L21 16" fill="none" stroke="#d02838" stroke-width="1.200"/></svg>
<!-- 10 concentric -->
<svg class="ri" style="top:472px" viewBox="0 0 24 24"><path d="M1 3.500 L18 1.500 L23.500 17 L5.500 22Z" fill="#f4f7fd" stroke="#2a3a88" stroke-width=".9"/><path d="M4 5.800 L16.500 4.300 L20.500 15.500 L7.300 19Z M7 8.300 L14.800 7.300 L17.300 14 L9.200 16.200Z M10 10.800 L13.200 10.400 L14.200 12.800 L10.900 13.700Z" fill="none" stroke="#d02838" stroke-width="1.100"/></svg>
<!-- 11 blue hex -->
<svg class="ri" style="top:502px" viewBox="0 0 24 24"><rect x="0.500" y="0.500" width="23.500" height="23" fill="#7f9fe0"/><path d="M3.500 5 L12 1.500 L20.500 5 V16 L12 20.500 L3.500 16Z" fill="#9fb8ec" stroke="#1f2f7a" stroke-width=".8"/><path d="M12 20.500 V24" stroke="#1f2f7a" stroke-width=".8"/><path d="M10.500 1.500 V11.500 L4 15 M13.500 1.500 V11.500 L20 15 M12 2 V12.500 M5 17 L12 13.500 L19 17" fill="none" stroke="#d02838" stroke-width=".9"/></svg>
<!-- 12 tool on striped surface -->
<svg class="ri" style="top:533px" viewBox="0 0 24 24"><path d="M1 10 C6 12 12 12 17 9 L23 11 C22 17 20 20 17 22.500 C12 24 6 24 2.500 23Z" fill="#5f8fe0" stroke="#1f3fa8" stroke-width=".6"/><path d="M1.500 13 C7 15 13 14.500 19 12 M2 16.500 C8 18.500 14 18 21 15 M2.300 20 C8 22 14 21.500 19.500 19" fill="none" stroke="#e6eefc" stroke-width="1.600"/><path d="M1.800 14.800 C7 16.800 13.500 16.300 20 13.500 M2.200 18.300 C8 20.300 14 19.800 20.500 17" fill="none" stroke="#d84040" stroke-width="1.300"/><path d="M15.500 1 L23.500 1.500 L20 8.500 L13.500 13.500 L11 11.500Z" fill="url(#gGold)" stroke="#5a3500" stroke-width=".4"/><path d="M18 2.500 L13 11 L15 12 L20.500 3.500Z" fill="#2a1a00" opacity=".7"/></svg>
<!-- 13 blue box + pencil -->
<svg class="ri" style="top:563px" viewBox="0 0 24 24"><rect x="0.500" y="0.500" width="23.500" height="23" fill="#7f9fe0"/><path d="M3.500 5 L12 1.500 L20.500 5 V16 L12 20.500 L3.500 16Z" fill="#9fb8ec" stroke="#1f2f7a" stroke-width=".8"/><path d="M12 20.500 V24 M12 2 V12.500 M5 17 L12 13.500 L19 17" fill="none" stroke="#d02838" stroke-width=".8"/><path d="M19 1.500 L23 5.500 L11 15.500 L7.500 12Z" fill="#2a4f9c" stroke="#14204a" stroke-width=".5"/><path d="M7.500 12 L11 15.500 L5 17.500Z" fill="#f2d9a6" stroke="#6a5020" stroke-width=".4"/><path d="M5 17.500 L6.500 15.200 L7.800 16.500Z" fill="#111"/></svg>
<!-- group 2 -->
<style>.rx{position:absolute;left:1888px;width:33px;text-align:center;font-size:14px;font-weight:700;color:#8fa0c8;line-height:1;letter-spacing:.2px}</style>
<div class="rx" style="top:612px">xyz</div>
<div class="a" style="left:1899px;top:630px;width:8px;height:8px;border-radius:50%;background:#7f98cc"></div>
<div class="rx" style="top:643px">xyz</div>
<svg style="left:1891px;top:659px" width="26" height="10" viewBox="0 0 26 10"><circle cx="4.500" cy="5" r="2.800" fill="#f4f6fa" stroke="#8fa0c8" stroke-width="1"/><path d="M8.500 5 H14.500 M12.500 2.800 L15 5 L12.500 7.200" fill="none" stroke="#8fa0c8" stroke-width="1"/><circle cx="20.500" cy="5" r="3.600" fill="#7f98cc"/></svg>
<div class="a" style="left:1901px;top:676px;border:3.500px solid transparent;border-left:4px solid #2a2a30;border-right:none"></div>
<svg style="left:1891px;top:688px" width="26" height="26" viewBox="0 0 26 26"><path d="M3.500 1.500 V22.500 H24" fill="none" stroke="#8fa0c8" stroke-width="1.100"/><path d="M1.500 4 L3.500 1 L5.500 4 M21.500 20.500 L24.500 22.500 L21.500 24.500" fill="none" stroke="#8fa0c8" stroke-width="1"/><text x="5.500" y="19" font-family="Liberation Sans, sans-serif" font-size="15" font-weight="700" fill="#8fa0c8" letter-spacing="-.5">2D</text></svg>
<svg style="left:1891px;top:719px" width="26" height="26" viewBox="0 0 26 26"><path d="M11 1.500 C11 8 8 11.500 1.500 13" fill="none" stroke="#7f98cc" stroke-width="1.600"/><path d="M2 23.500 L9.500 16.500 M6 12 L14 17.500" stroke="#5a78b8" stroke-width="2.200"/><path d="M11.500 11.500 H24.500 L20 17 V22.500 L16.500 23.500 V17Z" fill="#dfe8f8" stroke="#7f98cc" stroke-width="1.100"/></svg>
<div class="a" style="left:1889px;top:747px;width:29px;height:28px;box-sizing:border-box;border:1px solid #aab4c8;border-radius:3px;background:linear-gradient(180deg,#eef0f5,#d9dde6)"></div>
<svg style="left:1891px;top:749px" width="26" height="26" viewBox="0 0 26 26"><g transform="rotate(-40 17 8)"><rect x="10.500" y="5" width="8" height="5.500" rx="2.700" fill="none" stroke="#c8b060" stroke-width="2"/><rect x="15.500" y="5" width="8" height="5.500" rx="2.700" fill="none" stroke="#d8c070" stroke-width="2"/></g><text x="1.500" y="23.500" font-family="Liberation Sans, sans-serif" font-size="13" font-weight="700" fill="#7f90c0" letter-spacing="-.6">2D</text></svg>
<div class="a" style="left:1889px;top:777px;width:29px;height:28px;box-sizing:border-box;border:1px solid #aab4c8;border-radius:3px;background:linear-gradient(180deg,#eef0f5,#d9dde6)"></div>
<svg style="left:1891px;top:779px" width="26" height="26" viewBox="0 0 26 26"><g transform="rotate(-40 17 9)"><rect x="10.500" y="6" width="8" height="5.500" rx="2.700" fill="none" stroke="#c8b060" stroke-width="2"/><rect x="15.500" y="6" width="8" height="5.500" rx="2.700" fill="none" stroke="#d8c070" stroke-width="2"/></g><path d="M4 2.500 C4 13 7 19.500 14.500 21.500" fill="none" stroke="#5a6aa0" stroke-width="1.500"/><path d="M3.500 13 V23" stroke="#e06060" stroke-width="1" stroke-dasharray="1.500 1.500"/></svg>
<svg style="left:1891px;top:809px" width="26" height="26" viewBox="0 0 26 26"><path d="M3 23 L12.500 14.500" stroke="#b89c48" stroke-width="4" stroke-linecap="round"/><path d="M3 23 L12.500 14.500" stroke="#e6d28a" stroke-width="1.800" stroke-linecap="round"/><ellipse cx="16.500" cy="9.500" rx="6.200" ry="5.200" transform="rotate(-40 16.500 9.500)" fill="none" stroke="#c0a452" stroke-width="3"/><ellipse cx="16.500" cy="9.500" rx="6.200" ry="5.200" transform="rotate(-40 16.500 9.500)" fill="none" stroke="#e8d690" stroke-width="1.200"/><path d="M9.500 13 L14 17.500" stroke="#c0a452" stroke-width="2.400" stroke-linecap="round"/></svg>
<div class="a" style="left:1901px;top:839px;border:3.500px solid transparent;border-left:4px solid #2a2a30;border-right:none"></div>
<div class="hot" style="left:1889px;top:850px;width:30px;height:41px"></div>
<svg style="left:1891px;top:852px" width="26" height="22" viewBox="0 0 26 22"><rect x="1.500" y="1.500" width="16" height="14.500" fill="#fff" stroke="#111" stroke-width="1.200"/><path d="M2 5.500 H17 M9 2 V5.500" stroke="#111" stroke-width=".8"/><path d="M9 9 H17.500 M9 11.500 H17.500 M9 14 H17.500" stroke="#7a8aa8" stroke-width="1"/><path d="M14 7 H22 M18 3 V11 M17 13 H22" stroke="#10208a" stroke-width="2.600"/><path d="M18.500 15 L23 19.500 M23 19.500 V16.500 M23 19.500 H20" stroke="#111" stroke-width="1.200" fill="none"/></svg>
<div class="a" style="left:1901px;top:882px;border:3px solid transparent;border-left:3.500px solid #2a2a30;border-right:none"></div>
<!-- ===== TASKBAR ===== -->
<div class="a" id="taskbar" style="left:0;top:1040px;width:1920px;height:40px;overflow:hidden;background:linear-gradient(90deg,#19212b 0,#232b33 70px,#2e3a3a 300px,#3a4a45 420px,#34433f 700px,#394843 900px,#27323a 1020px,#161e29 1120px,#10161f 1300px,#131a24 1600px,#1a222d 1920px)">
  <div class="a" style="left:330px;top:6px;width:90px;height:30px;background:#3e5350;filter:blur(12px);opacity:.8"></div>
  <div class="a" style="left:470px;top:0px;width:60px;height:26px;background:#222d2c;filter:blur(10px);opacity:.9"></div>
  <div class="a" style="left:560px;top:10px;width:120px;height:30px;background:#42544f;filter:blur(14px);opacity:.7"></div>
  <div class="a" style="left:720px;top:2px;width:80px;height:22px;background:#2a3634;filter:blur(10px);opacity:.9"></div>
  <div class="a" style="left:800px;top:14px;width:130px;height:26px;background:#3d4f49;filter:blur(14px);opacity:.8"></div>
  <div class="a" style="left:940px;top:0px;width:90px;height:24px;background:#37464a;filter:blur(12px);opacity:.7"></div>
  <div class="a" style="left:1020px;top:8px;width:60px;height:20px;background:#0e141c;filter:blur(10px);opacity:.9"></div>
  <div class="a" style="left:1040px;top:20px;width:80px;height:20px;background:#2f403c;filter:blur(12px);opacity:.7"></div>
  <div class="a" style="left:0;top:0;width:1920px;height:40px;background:linear-gradient(180deg,rgba(255,255,255,.10) 0,rgba(255,255,255,.03) 45%,rgba(0,0,0,.08) 55%,rgba(0,0,0,.15) 100%)"></div>
  <div class="a" style="left:0;top:0;width:1920px;height:1px;background:#3c454c"></div>
  <div class="a" style="left:0;top:1px;width:1920px;height:1px;background:rgba(190,205,215,.35)"></div>
  <!-- IE button (running, inactive) -->
  <div class="a" style="left:60px;top:1px;width:50px;height:38px;box-sizing:border-box;border:1px solid #20262a;border-radius:3px;background:linear-gradient(180deg,#6f777b 0,#4f575b 45%,#3f474b 55%,#555d60 100%);box-shadow:inset 0 0 0 1px rgba(220,230,235,.45)"></div>
  <div class="a" style="left:110px;top:2px;width:3px;height:36px;border:1px solid #20262a;border-left:none;border-radius:0 3px 3px 0;background:#50585c;box-shadow:inset -1px 0 0 rgba(220,230,235,.4)"></div>
  <div class="a" style="left:116px;top:2px;width:1px;height:36px;background:rgba(200,210,215,.35)"></div>
  <!-- Edgecam button (active) -->
  <div class="a" style="left:246px;top:1px;width:53px;height:38px;box-sizing:border-box;border:1px solid #2a3034;border-radius:3px;background:linear-gradient(135deg,#8f9596 0,#a9aeae 40%,#c4c8c8 55%,#9a9f9f 100%);box-shadow:inset 0 0 0 1px rgba(255,255,255,.65)"></div>
  <div class="a" style="left:299px;top:2px;width:4px;height:36px;border:1px solid #2a3034;border-left:none;border-radius:0 3px 3px 0;background:#9a9f9f;box-shadow:inset -1px 0 0 rgba(255,255,255,.5)"></div>
  <!-- Start orb -->
  <svg style="left:6px;top:0" width="42" height="40" viewBox="0 0 42 40"><defs><radialGradient id="orb" cx=".5" cy=".75" r=".75"><stop offset="0" stop-color="#5fd8ff"/><stop offset=".35" stop-color="#1f88d8"/><stop offset=".75" stop-color="#1a4f9c"/><stop offset="1" stop-color="#0e2a5a"/></radialGradient><linearGradient id="orbHi" x1="0" y1="0" x2="0" y2="1"><stop offset="0" stop-color="#ffffff" stop-opacity=".75"/><stop offset="1" stop-color="#ffffff" stop-opacity=".05"/></linearGradient></defs><circle cx="20.600" cy="20" r="18.600" fill="url(#orb)" stroke="#8fb8e0" stroke-width=".9"/><path d="M4 16 C8 3 33 3 37.200 16 C30 21 12 21 4 16Z" fill="url(#orbHi)"/><path d="M12.500 12.500 C15 10.500 17.500 10.800 19.500 12.200 L18.200 18.800 C16 17.500 13.500 17.500 11.200 19Z" fill="#f0582a"/><path d="M21 12.800 C23.500 14.200 26 14.200 28.800 12.400 L27.500 19 C25 20.800 22.500 20.600 19.800 19.300Z" fill="#8cc83c"/><path d="M10.800 20.500 C13.200 18.800 15.800 19 17.900 20.300 L16.600 27 C14.500 25.500 12 25.500 9.500 27.200Z" fill="#3fa0e8"/><path d="M19.500 20.800 C22 22.200 24.500 22.200 27.200 20.500 L25.900 27.200 C23.200 29 20.800 28.700 18.200 27.400Z" fill="#f8c42c"/></svg>
  <!-- IE icon -->
  <svg style="left:68px;top:3px" width="34" height="34" viewBox="0 0 34 34"><defs><linearGradient id="ieb" x1="0" y1="0" x2="0" y2="1"><stop offset="0" stop-color="#7fd4f8"/><stop offset=".5" stop-color="#2fa4e8"/><stop offset="1" stop-color="#1f7fd0"/></linearGradient></defs><path d="M8.500 19.500 H29.500 C30.500 10 24.500 5.500 18.500 5.500 C11 5.500 6 11 6 18 C6 25.500 11.500 30 18.500 30 C23.500 30 27.500 27.500 29 23.500 H22.500 C21.500 25 20 25.500 18.500 25.500 C15 25.500 13 23 12.800 19.500 M12.800 15.500 C13.200 12.500 15.500 10.500 18.500 10.500 C21.500 10.500 23.300 12.500 23.500 15.500Z" fill="url(#ieb)" fill-rule="evenodd" stroke="#1a6ab8" stroke-width=".5"/><path d="M3 28.500 C-1.500 22 12 5.500 26 2.500 C30.500 1.800 32 4 30.500 8 C30 4.500 26.500 4.500 22 6.500 C12 11 4.500 22 6 27.500 C6.500 29.500 8.500 30.500 11.500 29.500 C8 32 4.500 31 3 28.500Z" fill="#f8cc2c" stroke="#c89810" stroke-width=".4"/></svg>
  <!-- Explorer icon -->
  <svg style="left:134px;top:6px" width="34" height="30" viewBox="0 0 34 30"><path d="M1.500 7 V3 Q1.500 1.500 3 1.500 H10 L12 3.500 H31 Q32.500 3.500 32.500 5 V7Z" fill="#e9c66a" stroke="#b8923a" stroke-width=".6"/><rect x="3.500" y="2.500" width="4" height="2.400" fill="#3cb04a"/><rect x="14" y="4.300" width="4" height="2.200" fill="#d83a2a"/><rect x="22" y="5" width="4" height="2.200" fill="#3a8ad8"/><path d="M1 7 H33 V26 Q33 27.500 31.500 27.500 H2.500 Q1 27.500 1 26Z" fill="#f7e2a0" stroke="#c8a44a" stroke-width=".6"/><path d="M1.500 7.500 H32.500 V14 H1.500Z" fill="#fbedc0"/><path d="M6.500 29 V20 Q6.500 17.500 9 17.500 H25 Q27.500 17.500 27.500 20 V29 H22.500 V23 H11.500 V29Z" fill="#8fc4ea" stroke="#4a8ac0" stroke-width=".7"/><path d="M7.500 20 Q7.500 18.500 9 18.500 H25 Q26.500 18.500 26.500 20 V21 H7.500Z" fill="#d4ecfb"/></svg>
  <!-- WMP icon -->
  <svg style="left:198px;top:8px" width="28" height="26" viewBox="0 0 28 26"><rect x="5" y="1" width="22" height="22" fill="#5f9fd8" stroke="#3a78b8" stroke-width=".6"/><rect x="3" y="2" width="22" height="22" fill="#7fb8e8" stroke="#3a78b8" stroke-width=".6"/><rect x="1" y="3" width="22" height="22" fill="#8fc4ee" stroke="#3a78b8" stroke-width=".6"/><circle cx="12" cy="14" r="8.600" fill="#f47a1a" stroke="#c85a08" stroke-width=".8"/><circle cx="12" cy="14" r="7" fill="none" stroke="#fbb060" stroke-width=".8"/><path d="M9 9 V19 L17.500 14Z" fill="#fff"/></svg>
  <!-- Edgecam icon -->
  <svg style="left:257px;top:6px" width="30" height="29" viewBox="0 0 30 29"><rect x="0.500" y="0.500" width="29" height="28" rx="3" fill="#f6f6f3" stroke="#d0d3cf" stroke-width=".8"/><path d="M6.800 15.800 H23.800 A8.300 8.300 0 1 0 21.600 21.400" fill="none" stroke="#8e948a" stroke-width="4.800"/><circle cx="8.500" cy="8.200" r="4" fill="#f6f6f3"/><circle cx="8.600" cy="8.300" r="2.700" fill="#58b535"/></svg>
  <!-- tray -->
  <div class="t" style="left:1694px;top:12.500px;font-size:11.500px;color:#fff;letter-spacing:-.3px">CS</div>
  <div class="a" style="left:1725px;top:17.500px;border:4px solid transparent;border-bottom:5px solid #fff;border-top:none"></div>
  <svg style="left:1744px;top:11.500px" width="90" height="20" viewBox="0 0 90 20"><path d="M4 3 V17" stroke="#fff" stroke-width="1.300"/><path d="M5.500 4 C8 3 9.500 5.500 12 4.500 L13 4.200 V7 L16 8 L13 9.500 V10 C10 11.500 8.500 9 5.500 10Z" fill="#fff"/>
  <rect x="29" y="5.500" width="9" height="11" rx="1" fill="none" stroke="#fff" stroke-width="1.300"/><path d="M31 5 V2.500 M36 5 V2.500" stroke="#fff" stroke-width="1.300"/><path d="M36 8 H41 V13 H38.500 V16 H36Z" fill="#fff"/><path d="M31 8.500 H35 M31 11 H35" stroke="#fff" stroke-width="1"/>
  <path d="M51 16 V14 M54 16 V12.500 M57 16 V10.500 M60 16 V8 M63 16 V5" stroke="#fff" stroke-width="1.700"/><path d="M50 16.500 H64" stroke="#fff" stroke-width=".6"/>
  <path d="M73 8 H76 L80 4 V16 L76 12 H73Z" fill="#fff"/><path d="M82.500 7 C84 8.500 84 11.500 82.500 13 M85 5 C87.500 7.500 87.500 12.500 85 15" fill="none" stroke="#fff" stroke-width="1.100"/></svg>
  <div class="t" style="left:1859px;top:7.500px;font-size:11px;color:#fff;letter-spacing:-.05px">17:35</div>
  <div class="t" style="left:1846px;top:24px;font-size:11px;color:#fff;letter-spacing:-.15px">30.10.2013</div>
  <div class="a" style="left:1906px;top:1px;width:14px;height:39px;box-sizing:border-box;border:1px solid #5a646c;border-right:none;background:linear-gradient(180deg,#5f696f 0,#3c444a 45%,#23292f 55%,#2b3137 100%);box-shadow:inset 1px 1px 0 rgba(255,255,255,.25)"></div>
</div>
<!-- ===== RED ANNOTATION OVERLAY ===== -->
<svg style="left:0;top:0;z-index:50" width="1920" height="1080" viewBox="0 0 1920 1080">
<path d="M41.7 216.2C43.1 215.5 45.7 214.7 48.0 214.3 C50.3 214.0 53.3 213.8 55.6 214.1 C57.9 214.4 59.7 215.4 62.0 216.0 C64.3 216.6 67.1 217.2 69.4 217.6 C71.7 218.0 73.7 217.9 76.0 218.2 C78.3 218.5 81.0 219.1 83.3 219.6 C85.6 220.1 87.7 220.7 90.0 221.0 C92.3 221.3 95.0 221.5 97.2 221.7 C99.4 221.9 101.2 221.8 103.0 222.0 C104.8 222.2 106.9 222.6 108.3 223.1 C109.7 223.6 110.6 224.3 111.2 225.0 C111.8 225.7 111.7 226.3 111.8 227.3 C111.9 228.3 111.7 229.8 111.6 231.0 C111.5 232.2 111.4 233.1 111.1 234.2 C110.8 235.3 110.2 236.6 109.5 237.5 C108.8 238.4 108.7 239.4 106.9 239.8 C105.2 240.2 101.5 240.2 99.0 240.2 C96.5 240.2 93.7 240.1 91.7 239.8 C89.7 239.5 88.4 239.1 87.0 238.6 C85.6 238.1 85.1 237.6 83.3 237.0 C81.5 236.4 78.3 235.5 76.0 235.0 C73.7 234.5 71.7 234.2 69.4 234.2 C67.1 234.2 64.3 234.7 62.0 234.8 C59.7 234.9 57.6 234.9 55.6 234.9 C53.6 234.9 51.9 235.1 50.0 235.0 C48.1 234.9 45.8 234.6 44.4 234.2 C43.0 233.8 42.3 233.2 41.5 232.5 C40.7 231.8 40.1 231.2 39.6 230.1 C39.1 229.0 38.9 227.4 38.8 226.0 C38.7 224.6 38.7 223.0 38.9 221.7 C39.1 220.4 39.3 219.1 39.8 218.2 C40.3 217.3 40.3 216.8 41.7 216.2Z" fill="none" stroke="#e81c24" stroke-width="3.4" stroke-linecap="round" stroke-linejoin="round"/>
<path d="M111.8 227.3C113.3 227.2 117.9 226.8 121.0 226.5 C124.1 226.2 127.3 225.6 130.6 225.2 C133.9 224.8 137.3 224.3 141.0 223.8 C144.7 223.3 150.2 223.2 152.8 222.4 C155.5 221.6 153.7 219.8 156.9 218.9 C160.1 218.0 166.9 217.8 172.0 217.2 C177.1 216.6 183.5 216.0 187.5 215.5 C191.5 215.0 193.0 214.5 196.0 214.0 C199.0 213.5 202.3 213.0 205.6 212.7 C208.9 212.4 212.5 212.3 216.0 212.2 C219.5 212.1 224.0 212.5 226.4 212.0 C228.8 211.5 228.3 209.9 230.6 209.4 C232.9 208.9 232.6 209.2 240.0 209.2 C247.4 209.2 268.1 209.6 275.0 209.3 C281.9 209.0 260.9 207.7 281.7 207.3 C302.5 207.0 358.6 207.2 400.0 207.2 C441.4 207.2 505.8 207.0 530.0 207.3 C554.2 207.6 540.0 208.3 545.0 209.0 C550.0 209.7 555.0 210.4 560.0 211.7 C565.0 213.0 570.0 215.0 575.0 216.8 C580.0 218.6 584.2 220.8 590.0 222.7 C595.8 224.6 603.3 226.4 610.0 228.2 C616.7 230.0 624.0 231.6 630.0 233.3 C636.0 235.0 640.5 236.8 646.0 238.5 C651.5 240.2 658.0 241.7 663.3 243.3 C668.6 244.9 673.0 246.6 678.0 248.2 C683.0 249.8 688.8 251.3 693.3 252.7 C697.8 254.1 701.1 255.3 705.0 256.5 C708.9 257.7 712.5 258.9 716.7 260.0 C720.9 261.1 725.6 262.3 730.0 263.3 C734.4 264.3 738.1 265.0 743.3 266.0 C748.5 267.0 754.9 268.2 761.0 269.2 C767.1 270.1 773.8 271.2 780.0 271.7 C786.2 272.2 791.9 272.1 798.0 272.2 C804.1 272.3 811.0 272.0 816.7 272.3 C822.4 272.6 827.0 273.3 832.0 274.0 C837.0 274.7 841.7 275.9 846.7 276.7 C851.7 277.5 857.8 277.4 862.2 278.7 C866.6 280.0 869.7 282.9 873.3 284.3 C876.9 285.7 880.3 286.0 884.0 286.8 C887.7 287.6 892.1 288.1 895.6 288.9 C899.1 289.6 901.9 290.4 905.0 291.3 C908.1 292.2 910.9 292.9 914.1 294.4 C917.3 295.9 920.6 298.3 924.0 300.5 C927.4 302.7 931.2 305.6 934.4 307.4 C937.6 309.1 940.2 309.8 943.0 311.0 C945.8 312.2 948.2 313.1 951.1 314.8 C954.0 316.5 957.4 318.8 960.5 321.0 C963.6 323.2 967.1 325.6 969.6 327.8 C972.1 330.0 973.6 331.9 975.5 334.0 C977.4 336.1 979.2 338.2 980.7 340.7 C982.2 343.2 983.4 346.2 984.5 349.0 C985.6 351.8 986.7 354.9 987.2 357.4 C987.8 359.9 987.8 361.8 987.8 364.0 C987.8 366.2 987.6 368.9 987.2 370.4 C986.8 371.9 985.7 372.7 985.4 373.1" fill="none" stroke="#e81c24" stroke-width="3.2" stroke-linecap="round" stroke-linejoin="round"/>
<path d="M985.4 373.1C984.8 374.1 982.9 377.0 981.5 379.0 C980.1 381.0 978.5 383.1 977.0 385.2 C975.5 387.3 973.8 389.4 972.3 391.5 C970.8 393.6 969.2 395.9 967.8 398.1 C966.4 400.3 965.2 402.3 964.0 404.5 C962.8 406.7 961.4 408.5 960.4 411.1 C959.4 413.7 958.6 416.8 958.0 420.0 C957.4 423.2 956.9 428.8 956.7 430.6" fill="none" stroke="#e81c24" stroke-width="3.3" stroke-linecap="round" stroke-linejoin="round"/>
<path d="M947.4 408.3 C950 416 954 424 956.7 430.6 C962 424 968 419 973.3 413.9" fill="none" stroke="#e81c24" stroke-width="3.1" stroke-linecap="round" stroke-linejoin="round"/>
<path d="M987.0 371.0C987.5 371.2 988.8 371.1 990.0 372.2 C991.2 373.3 993.0 375.6 994.5 377.5 C996.0 379.4 997.7 381.1 999.3 383.3 C1000.9 385.5 1002.5 388.0 1004.0 390.5 C1005.5 393.0 1007.0 395.4 1008.5 398.1 C1010.0 400.9 1011.7 403.9 1013.2 407.0 C1014.8 410.1 1016.6 413.9 1017.8 416.7 C1019.0 419.4 1019.6 421.2 1020.5 423.5 C1021.4 425.8 1022.8 429.4 1023.3 430.6" fill="none" stroke="#e81c24" stroke-width="3.3" stroke-linecap="round" stroke-linejoin="round"/>
<path d="M998.9 417.2 C1007 420.5 1016 425 1023.3 430.6 C1025 421 1025.8 411 1025.7 402.8" fill="none" stroke="#e81c24" stroke-width="3.1" stroke-linecap="round" stroke-linejoin="round"/>
<path d="M955.4 446.7C954.5 447.6 951.2 449.4 950.0 452.0 C948.8 454.6 948.3 457.3 948.0 462.0 C947.7 466.7 948.0 473.7 948.3 480.0 C948.5 486.3 949.0 493.3 949.5 500.0 C950.0 506.7 950.8 512.9 951.5 520.0 C952.2 527.1 953.0 535.9 954.0 542.6 C955.0 549.3 956.1 554.8 957.5 560.0 C958.9 565.2 960.8 570.1 962.5 574.0 C964.2 577.9 966.2 581.0 968.0 583.5 C969.8 586.0 971.4 587.7 973.0 589.0 C974.6 590.3 976.7 590.9 977.4 591.3" fill="none" stroke="#e81c24" stroke-width="3.4" stroke-linecap="round" stroke-linejoin="round"/>
<path d="M1028.0 444.1C1029.7 443.1 1031.3 444.2 1033.0 446.0 C1034.7 447.8 1036.0 450.8 1038.0 455.0 C1040.0 459.2 1042.7 466.0 1045.0 471.0 C1047.3 476.0 1049.6 480.5 1052.0 485.0 C1054.4 489.5 1057.2 493.7 1059.5 498.0 C1061.8 502.3 1064.3 506.6 1066.0 511.0 C1067.7 515.4 1068.7 519.6 1069.4 524.4 C1070.1 529.2 1070.2 534.9 1070.2 540.0 C1070.2 545.1 1070.1 550.0 1069.5 555.0 C1068.9 560.0 1068.1 565.7 1066.5 570.0 C1064.9 574.3 1062.8 578.1 1060.0 581.0 C1057.2 583.9 1052.5 586.3 1050.0 587.2 C1047.5 588.1 1046.8 587.4 1045.0 586.5 C1043.2 585.6 1041.1 584.4 1039.0 582.0 C1036.9 579.6 1034.3 576.0 1032.5 572.0 C1030.7 568.0 1029.2 563.3 1028.0 558.0 C1026.8 552.7 1026.2 548.0 1025.4 540.0 C1024.7 532.0 1024.0 519.2 1023.5 510.0 C1023.0 500.8 1022.6 492.5 1022.3 485.0 C1022.0 477.5 1021.4 470.3 1021.5 464.8 C1021.6 459.3 1021.9 455.4 1023.0 452.0 C1024.1 448.6 1026.3 445.1 1028.0 444.1Z" fill="none" stroke="#e81c24" stroke-width="3.6" stroke-linecap="round" stroke-linejoin="round"/>
</svg>
</div></body></html>
